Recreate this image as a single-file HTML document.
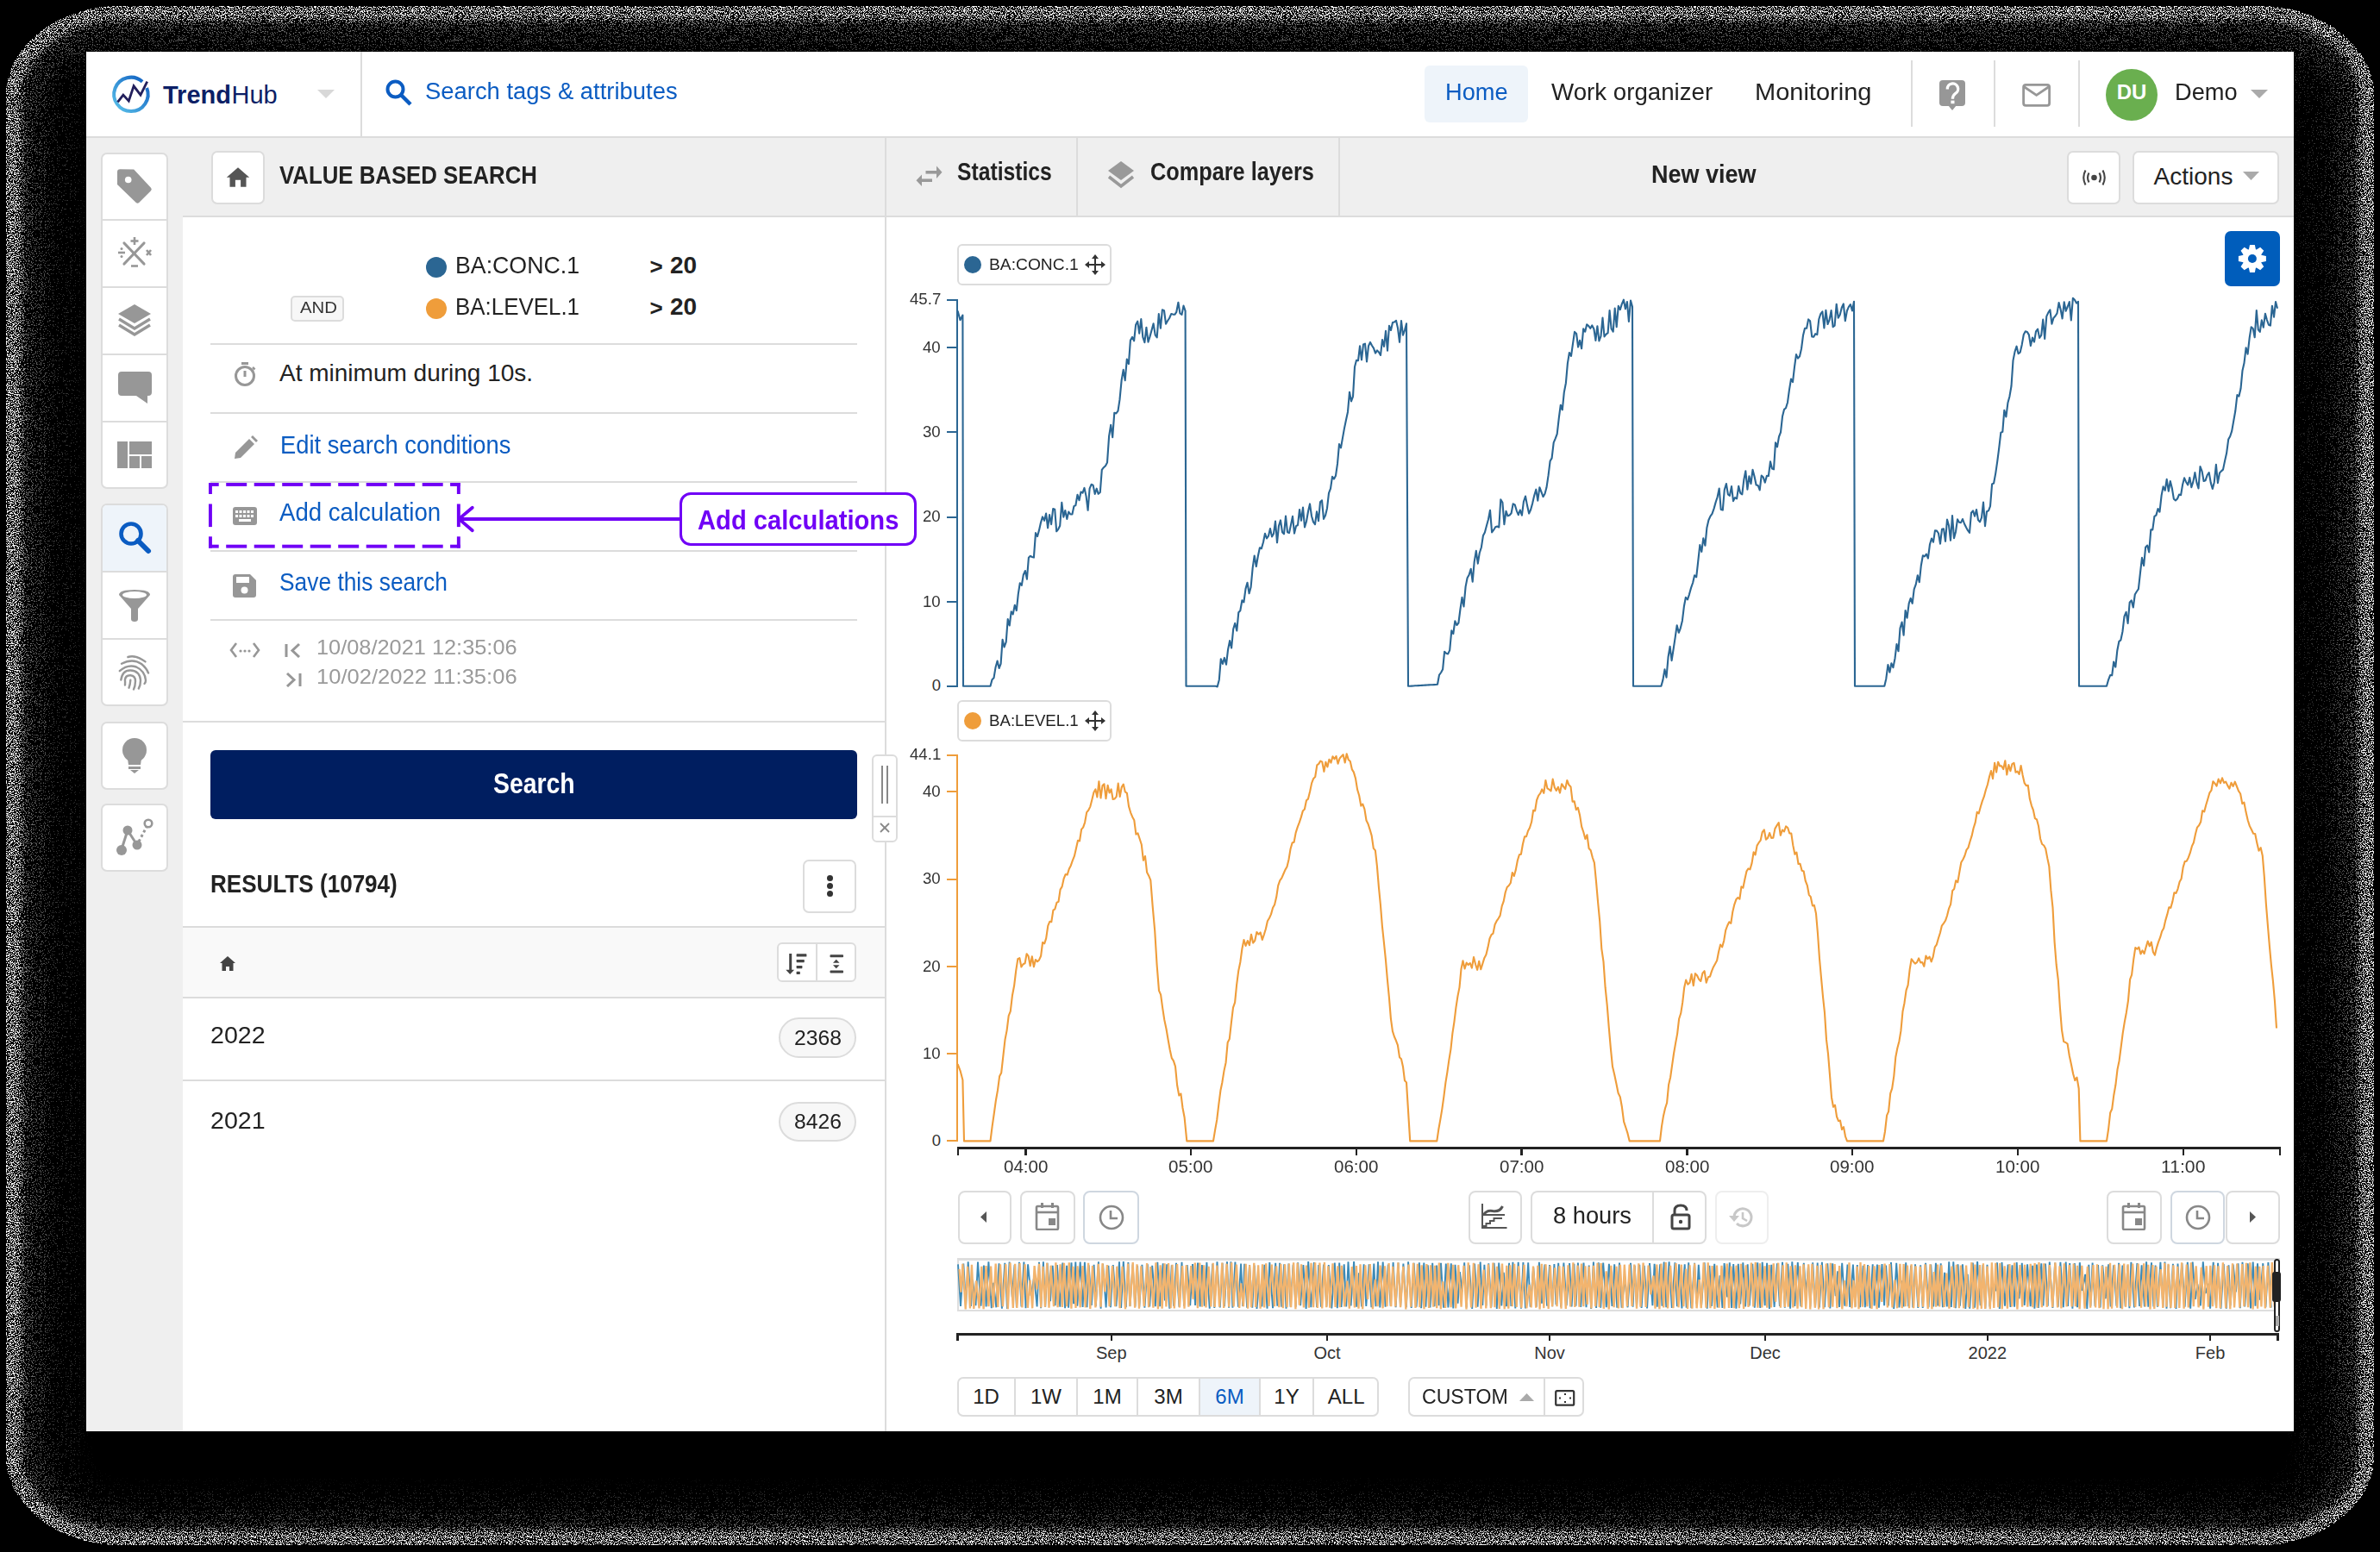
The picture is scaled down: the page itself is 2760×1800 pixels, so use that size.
<!DOCTYPE html>
<html><head><meta charset="utf-8"><style>
html,body{margin:0;padding:0;}
body{width:2760px;height:1800px;background:#000;position:relative;overflow:hidden;font-family:"Liberation Sans",sans-serif;}
body>div,body>svg{position:absolute;}
</style></head><body>
<svg style="left:0;top:0" width="2760" height="1800"><defs>
<filter id="gb3" x="-5%" y="-5%" width="110%" height="110%"><feGaussianBlur stdDeviation="3"/></filter>
<filter id="gb12" x="-5%" y="-5%" width="110%" height="110%"><feGaussianBlur stdDeviation="12"/></filter>
<filter id="gb16" x="-5%" y="-5%" width="110%" height="110%"><feGaussianBlur stdDeviation="16"/></filter>
<filter id="dither" x="0" y="0" width="2760" height="1800" filterUnits="userSpaceOnUse" color-interpolation-filters="sRGB">
<feColorMatrix in="SourceGraphic" type="matrix" values="0 0 0 0 0  0 0 0 0 0  0 0 0 0 0  1 0 0 0 0" result="L"/>
<feComponentTransfer in="L" result="Da"><feFuncA type="table" tableValues="0.000 0.050 0.094 0.137 0.180 0.202 0.225 0.247 0.270 0.283 0.297 0.310 0.323 0.337 0.350 0.363 0.377 0.390 0.403 0.417 0.430 0.430 0.430 0.430 0.430 0.430 0.430 0.430 0.430 0.430 0.430 0.430 0.430 0.430 0.430 0.430 0.430 0.430 0.430 0.430 0.430"/></feComponentTransfer>
<feColorMatrix in="Da" type="matrix" values="0 0 0 0 1  0 0 0 0 1  0 0 0 0 1  0 0 0 1 0" result="I"/>
<feTurbulence type="fractalNoise" baseFrequency="0.8" numOctaves="1" seed="7" result="T"/>
<feColorMatrix in="T" type="matrix" values="0 0 0 0 1  0 0 0 0 1  0 0 0 0 1  3.2 0 0 0 -1.1" result="N"/>
<feComposite in="I" in2="N" operator="arithmetic" k1="0" k2="30" k3="30" k4="-30" result="D"/>
<feComponentTransfer in="SourceGraphic" result="B"><feFuncR type="table" tableValues="0.150 0.188 0.225 0.262 0.300 0.350 0.400 0.450 0.500 0.537 0.575 0.613 0.650 0.688 0.725 0.762 0.800 0.837 0.875 0.912 0.950 0.953 0.955 0.957 0.960 0.962 0.965 0.968 0.970 0.972 0.975 0.978 0.980 0.982 0.985 0.988 0.990 0.993 0.995 0.998 1.000"/><feFuncG type="table" tableValues="0.150 0.188 0.225 0.262 0.300 0.350 0.400 0.450 0.500 0.537 0.575 0.613 0.650 0.688 0.725 0.762 0.800 0.837 0.875 0.912 0.950 0.953 0.955 0.957 0.960 0.962 0.965 0.968 0.970 0.972 0.975 0.978 0.980 0.982 0.985 0.988 0.990 0.993 0.995 0.998 1.000"/><feFuncB type="table" tableValues="0.150 0.188 0.225 0.262 0.300 0.350 0.400 0.450 0.500 0.537 0.575 0.613 0.650 0.688 0.725 0.762 0.800 0.837 0.875 0.912 0.950 0.953 0.955 0.957 0.960 0.962 0.965 0.968 0.970 0.972 0.975 0.978 0.980 0.982 0.985 0.988 0.990 0.993 0.995 0.998 1.000"/><feFuncA type="linear" slope="0" intercept="1"/></feComponentTransfer>
<feComposite in="D" in2="B" operator="arithmetic" k1="1" k2="0" k3="0" k4="0"/>
</filter></defs>
<g filter="url(#dither)">
<rect x="7" y="7" width="2746" height="1785" rx="135" ry="105" fill="rgb(128,128,128)"/>
<rect x="25" y="24" width="2710" height="1750" rx="117" ry="88" fill="rgb(52,52,52)" filter="url(#gb3)"/>
<rect x="45" y="44" width="2670" height="1716" rx="97" ry="70" fill="rgb(14,14,14)" filter="url(#gb12)"/>
<rect x="80" y="79" width="2600" height="1662" rx="62" ry="40" fill="rgb(0,0,0)" filter="url(#gb16)"/>
</g></svg>
<div style="left:100.0px;top:60.0px;width:2560.0px;height:1600.0px;background:#fff;"></div>
<div style="left:100.0px;top:158.0px;width:2560.0px;height:2.0px;background:#dcdcdc;"></div>
<svg style="left:126.0px;top:84.0px;" width="52" height="52" viewBox="0 0 52 52"><defs><linearGradient id="lg" x1="0" y1="1" x2="1" y2="0"><stop offset="0" stop-color="#5cc3ea"/><stop offset="1" stop-color="#0d5cc0"/></linearGradient></defs><path d="M 39.08 10.76 A 19.7 19.7 0 1 0 44.17 18.02" fill="none" stroke="url(#lg)" stroke-width="4"/><polyline points="10.5,34.4 16.9,26.1 23.3,33.1 29.1,15.8 37,26.1 44.7,10.6" fill="none" stroke="#221f5c" stroke-width="2.8" stroke-linejoin="miter"/></svg>
<div style="left:189.0px;top:95.8px;font-size:29px;line-height:29px;color:#0c1f66;font-weight:700;white-space:nowrap;">Trend</div>
<div style="left:268.5px;top:95.8px;font-size:29px;line-height:29px;color:#0c1f66;white-space:nowrap;font-weight:300;">Hub</div>
<svg style="left:368.0px;top:104.0px;" width="20" height="10" viewBox="0 0 20 10"><polygon points="0,0 20,0 10,10" fill="#d8d8d8"/></svg>
<div style="left:418.0px;top:60.0px;width:2.0px;height:98.0px;background:#dcdcdc;"></div>
<svg style="left:446.0px;top:91.0px;" width="34" height="34" viewBox="0 0 34 34"><circle cx="12.5" cy="12.5" r="9" fill="none" stroke="#0b5cc2" stroke-width="4"/><line x1="19" y1="19" x2="30" y2="30" stroke="#0b5cc2" stroke-width="4.5" stroke-linecap="butt"/></svg>
<div style="left:492.6px;top:93.1px;font-size:27px;line-height:27px;color:#0b5cc2;transform:scaleX(1.0154);transform-origin:0 0;white-space:nowrap;">Search tags &amp; attributes</div>
<div style="left:1652.0px;top:76.0px;width:120.0px;height:66.0px;background:#eef4fa;border-radius:6px;"></div>
<div style="left:1676.0px;top:92.7px;font-size:28px;line-height:28px;color:#0b5cc2;transform:scaleX(0.9720);transform-origin:0 0;white-space:nowrap;">Home</div>
<div style="left:1798.7px;top:92.7px;font-size:28px;line-height:28px;color:#222;transform:scaleX(0.9887);transform-origin:0 0;white-space:nowrap;">Work organizer</div>
<div style="left:2035.4px;top:92.7px;font-size:28px;line-height:28px;color:#222;transform:scaleX(1.0357);transform-origin:0 0;white-space:nowrap;">Monitoring</div>
<div style="left:2216.0px;top:70.0px;width:2.0px;height:77.0px;background:#dcdcdc;"></div>
<div style="left:2312.0px;top:70.0px;width:2.0px;height:77.0px;background:#dcdcdc;"></div>
<div style="left:2410.0px;top:70.0px;width:2.0px;height:77.0px;background:#dcdcdc;"></div>
<svg style="left:2246.0px;top:91.0px;" width="36" height="40" viewBox="0 0 36 40"><rect x="3" y="2" width="30" height="30" rx="4" fill="#979797"/><polygon points="13,31 23,31 18,37" fill="#979797"/><path d="M 12.3 12.5 A 6.2 6.2 0 1 1 21.5 17.5 Q 18.4 19.8 18.4 23.8" fill="none" stroke="#fff" stroke-width="3.3"/><rect x="16.4" y="25.6" width="4.1" height="3.6" fill="#fff"/></svg>
<svg style="left:2342.0px;top:95.0px;" width="38" height="30" viewBox="0 0 38 30"><rect x="4.6" y="3.3" width="30" height="24" rx="2.5" fill="none" stroke="#979797" stroke-width="2.8"/><polyline points="5,5.5 19.6,15.3 34.2,5.5" fill="none" stroke="#979797" stroke-width="2.8"/></svg>
<div style="left:2442px;top:80px;width:60px;height:60px;border-radius:50%;background:#6aaf4f;"></div>
<div style="left:2454.7px;top:95.3px;font-size:24px;line-height:24px;color:#fff;font-weight:700;white-space:nowrap;">DU</div>
<div style="left:2522.0px;top:92.7px;font-size:28px;line-height:28px;color:#222;transform:scaleX(0.9720);transform-origin:0 0;white-space:nowrap;">Demo</div>
<svg style="left:2610.0px;top:104.0px;" width="20" height="10" viewBox="0 0 20 10"><polygon points="0,0 20,0 10,10" fill="#aaa"/></svg>
<div style="left:100.0px;top:160.0px;width:2560.0px;height:91.0px;background:#efefef;"></div>
<div style="left:100.0px;top:251.0px;width:112.0px;height:1409.0px;background:#efefef;"></div>
<div style="left:212.0px;top:250.0px;width:2448.0px;height:2.0px;background:#dcdcdc;"></div>
<div style="left:212.0px;top:252.0px;width:814.0px;height:1408.0px;background:#fff;"></div>
<div style="left:1028.0px;top:252.0px;width:1632.0px;height:1408.0px;background:#fff;"></div>
<div style="left:1026.0px;top:160.0px;width:2.0px;height:1500.0px;background:#dcdcdc;"></div>
<div style="left:117.0px;top:177.0px;width:78.0px;height:390.0px;background:#fff;border:2px solid #dcdcdc;border-radius:7px;box-sizing:border-box;"></div>
<div style="left:119.0px;top:254.0px;width:74.0px;height:2.0px;background:#dcdcdc;"></div>
<div style="left:119.0px;top:332.0px;width:74.0px;height:2.0px;background:#dcdcdc;"></div>
<div style="left:119.0px;top:410.0px;width:74.0px;height:2.0px;background:#dcdcdc;"></div>
<div style="left:119.0px;top:488.0px;width:74.0px;height:2.0px;background:#dcdcdc;"></div>
<div style="left:117.0px;top:584.0px;width:78.0px;height:235.0px;background:#fff;border:2px solid #dcdcdc;border-radius:7px;box-sizing:border-box;"></div>
<div style="left:119.0px;top:586.0px;width:74.0px;height:76.0px;background:#eef4fa;border-radius:5px 5px 0 0;"></div>
<div style="left:119.0px;top:662.0px;width:74.0px;height:2.0px;background:#dcdcdc;"></div>
<div style="left:119.0px;top:740.0px;width:74.0px;height:2.0px;background:#dcdcdc;"></div>
<div style="left:117.0px;top:837.0px;width:78.0px;height:79.0px;background:#fff;border:2px solid #dcdcdc;border-radius:7px;box-sizing:border-box;"></div>
<div style="left:117.0px;top:932.0px;width:78.0px;height:79.0px;background:#fff;border:2px solid #dcdcdc;border-radius:7px;box-sizing:border-box;"></div>
<svg style="left:134.0px;top:194.0px;" width="44" height="44" viewBox="0 0 44 44"><path d="M2 5.5 Q2 2.3 5.2 2.3 L21.2 2.6 L41 23.8 Q42.6 25.5 41 27.2 L27.2 41 Q25.5 42.6 23.8 41 L2 20 Z" fill="#979797"/><circle cx="14.7" cy="14.5" r="3.8" fill="#fff"/></svg>
<svg style="left:136.0px;top:274.0px;" width="40" height="40" viewBox="0 0 40 40"><g stroke="#979797" stroke-width="3.2" stroke-linecap="round"><line x1="8" y1="8" x2="31" y2="32"/><line x1="31" y1="8" x2="8" y2="32"/></g><g stroke="#979797" stroke-width="2.6"><line x1="20" y1="1" x2="20" y2="10"/><line x1="15.5" y1="5.5" x2="24.5" y2="5.5"/><line x1="16" y1="34.5" x2="24" y2="34.5"/><line x1="1" y1="19" x2="9" y2="19"/><line x1="34" y1="16" x2="39" y2="22"/><line x1="39" y1="16" x2="34" y2="22"/></g><circle cx="5" cy="14.5" r="1.5" fill="#979797"/><circle cx="5" cy="23.5" r="1.5" fill="#979797"/></svg>
<svg style="left:135.0px;top:351.0px;" width="42" height="42" viewBox="0 0 42 42"><polygon points="21,2 40,13 21,24 2,13" fill="#979797"/><polyline points="3,19 21,30 39,19" fill="none" stroke="#979797" stroke-width="3.4"/><polyline points="3,26 21,37 39,26" fill="none" stroke="#979797" stroke-width="3.4"/></svg>
<svg style="left:135.0px;top:429.0px;" width="42" height="42" viewBox="0 0 42 42"><path d="M2 6 Q2 2 6 2 L37 2 Q41 2 41 6 L41 26 Q41 30 37 30 L36 30 L36 39 L23 30 L6 30 Q2 30 2 26 Z" fill="#979797"/></svg>
<svg style="left:135.0px;top:511.0px;" width="42" height="34" viewBox="0 0 42 34"><rect x="1" y="1" width="12" height="31" fill="#979797"/><rect x="15" y="1" width="26" height="15" fill="#979797"/><rect x="15" y="18" width="12" height="14" fill="#979797"/><rect x="29" y="18" width="12" height="14" fill="#979797"/></svg>
<svg style="left:135.0px;top:602.0px;" width="42" height="42" viewBox="0 0 42 42"><circle cx="17" cy="17" r="11.5" fill="none" stroke="#0b5cc2" stroke-width="4.6"/><line x1="25" y1="25" x2="37" y2="37" stroke="#0b5cc2" stroke-width="6" stroke-linecap="round"/></svg>
<svg style="left:136.0px;top:682.0px;" width="40" height="40" viewBox="0 0 40 40"><path d="M2 8 Q2 2 20 2 Q38 2 38 8 L24 24 L24 36 Q24 39 20 39 Q16 39 16 36 L16 24 Z" fill="#979797"/><ellipse cx="20" cy="8" rx="14" ry="4" fill="#fff"/></svg>
<svg style="left:126.0px;top:750.0px;" width="60" height="60" viewBox="0 0 60 60"><g fill="none" stroke="#979797" stroke-width="2.4" stroke-linecap="round"><path d="M22.4 12 Q31 9 42.5 17.4"/><path d="M15 19.7 Q28 13 38 20 Q44 25 46 30.5"/><path d="M12.8 28.2 Q22 20 32 23.5 Q42 28 43 39 Q43 41.5 41.5 43"/><path d="M14.3 38.5 Q16 27 25.5 27.5 Q36 28 37 39 Q37 45 34.8 48.5"/><path d="M19 44.5 Q19.3 41 18.9 38.5 Q19.5 33 25.3 33.2 Q31 33.5 31 40 Q30.8 46 29 49.5"/><path d="M25.3 38.7 Q25 44 23.5 47.7"/></g></svg>
<svg style="left:140.0px;top:856.0px;" width="32" height="42" viewBox="0 0 32 42"><circle cx="16" cy="14" r="14" fill="#979797"/><path d="M8 24 L24 24 L23 31 L9 31 Z" fill="#979797"/><rect x="9" y="33" width="14" height="3" fill="#979797"/><path d="M11 37 L21 37 L16 41 Z" fill="#979797"/></svg>
<svg style="left:134.0px;top:949.0px;" width="44" height="44" viewBox="0 0 44 44"><g stroke="#979797" stroke-width="3"><line x1="7" y1="36" x2="14" y2="14"/><line x1="14" y1="14" x2="25" y2="31"/></g><line x1="27" y1="27" x2="36" y2="10" stroke="#979797" stroke-width="3" stroke-dasharray="3 3"/><circle cx="7" cy="37" r="6" fill="#979797"/><circle cx="14" cy="14" r="5.5" fill="#979797"/><circle cx="25" cy="31" r="5.5" fill="#979797"/><circle cx="38" cy="6" r="4.3" fill="none" stroke="#979797" stroke-width="2.6"/></svg>
<div style="left:245.0px;top:175.0px;width:62.0px;height:62.0px;background:#fff;border:2px solid #dcdcdc;border-radius:7px;box-sizing:border-box;"></div>
<svg style="left:261.0px;top:192.0px;" width="30" height="28" viewBox="0 0 30 28"><path d="M15 2.3 L28.2 13.8 L24.5 13.8 L24.5 24.8 L18.1 24.8 L18.1 16.8 L11.9 16.8 L11.9 24.8 L5.5 24.8 L5.5 13.8 L1.8 13.8 Z" fill="#555"/></svg>
<div style="left:324.0px;top:187.6px;font-size:30px;line-height:30px;color:#222;font-weight:700;transform:scaleX(0.8596);transform-origin:0 0;white-space:nowrap;">VALUE BASED SEARCH</div>
<div style="left:493.7px;top:297.7px;width:24px;height:24px;border-radius:50%;background:#2b6693;"></div>
<div style="left:493.7px;top:345.7px;width:24px;height:24px;border-radius:50%;background:#ef9d3b;"></div>
<div style="left:527.5px;top:294.3px;font-size:28px;line-height:28px;color:#222;transform:scaleX(0.9541);transform-origin:0 0;white-space:nowrap;">BA:CONC.1</div>
<div style="left:527.5px;top:342.3px;font-size:28px;line-height:28px;color:#222;transform:scaleX(0.9251);transform-origin:0 0;white-space:nowrap;">BA:LEVEL.1</div>
<div style="left:753.5px;top:296.0px;font-size:26px;line-height:26px;color:#222;font-weight:700;white-space:nowrap;">&gt;</div>
<div style="left:777.0px;top:294.3px;font-size:28px;line-height:28px;color:#222;font-weight:700;white-space:nowrap;">20</div>
<div style="left:753.5px;top:344.0px;font-size:26px;line-height:26px;color:#222;font-weight:700;white-space:nowrap;">&gt;</div>
<div style="left:777.0px;top:342.3px;font-size:28px;line-height:28px;color:#222;font-weight:700;white-space:nowrap;">20</div>
<div style="left:337.0px;top:343.0px;width:62.0px;height:30.0px;background:#f7f7f7;border:2px solid #dcdcdc;border-radius:5px;box-sizing:border-box;"></div>
<div style="left:347.5px;top:348.3px;font-size:18.5px;line-height:18.5px;color:#333;transform:scaleX(1.1008);transform-origin:0 0;white-space:nowrap;">AND</div>
<div style="left:244.0px;top:398.0px;width:750.0px;height:2.0px;background:#dcdcdc;"></div>
<div style="left:244.0px;top:477.5px;width:750.0px;height:2.0px;background:#dcdcdc;"></div>
<div style="left:244.0px;top:558.0px;width:750.0px;height:2.0px;background:#dcdcdc;"></div>
<div style="left:244.0px;top:638.0px;width:750.0px;height:2.0px;background:#dcdcdc;"></div>
<div style="left:244.0px;top:718.0px;width:750.0px;height:2.0px;background:#dcdcdc;"></div>
<svg style="left:270.0px;top:419.0px;" width="28" height="30" viewBox="0 0 28 30"><circle cx="14" cy="17" r="10.5" fill="none" stroke="#979797" stroke-width="3"/><line x1="10" y1="2.5" x2="18" y2="2.5" stroke="#979797" stroke-width="3"/><line x1="14" y1="11" x2="14" y2="18" stroke="#979797" stroke-width="3"/><line x1="23" y1="7" x2="25.5" y2="9.5" stroke="#979797" stroke-width="2.5"/></svg>
<div style="left:324.0px;top:418.7px;font-size:28px;line-height:28px;color:#222;white-space:nowrap;">At minimum during 10s.</div>
<svg style="left:268.0px;top:504.0px;" width="32" height="32" viewBox="0 0 32 32"><path d="M4 28 L5 21 L21 5 L27 11 L11 27 Z" fill="#979797"/><path d="M23 3 L25 1 L31 7 L29 9 Z" fill="#979797"/></svg>
<div style="left:324.8px;top:502.1px;font-size:29px;line-height:29px;color:#0b5cc2;transform:scaleX(0.9425);transform-origin:0 0;white-space:nowrap;">Edit search conditions</div>
<svg style="left:269.0px;top:587.0px;" width="30" height="24" viewBox="0 0 30 24"><rect x="1" y="1" width="28" height="21" rx="3" fill="#979797"/><rect x="4.0" y="5" width="3" height="3" fill="#fff"/><rect x="4.0" y="10" width="3" height="3" fill="#fff"/><rect x="8.5" y="5" width="3" height="3" fill="#fff"/><rect x="8.5" y="10" width="3" height="3" fill="#fff"/><rect x="13.0" y="5" width="3" height="3" fill="#fff"/><rect x="13.0" y="10" width="3" height="3" fill="#fff"/><rect x="17.5" y="5" width="3" height="3" fill="#fff"/><rect x="17.5" y="10" width="3" height="3" fill="#fff"/><rect x="22.0" y="5" width="3" height="3" fill="#fff"/><rect x="22.0" y="10" width="3" height="3" fill="#fff"/><rect x="8" y="15" width="14" height="3" fill="#fff"/></svg>
<div style="left:324.0px;top:580.4px;font-size:29px;line-height:29px;color:#0b5cc2;transform:scaleX(0.9518);transform-origin:0 0;white-space:nowrap;">Add calculation</div>
<svg style="left:269.0px;top:665.0px;" width="29" height="29" viewBox="0 0 29 29"><path d="M1 4 Q1 1 4 1 L21 1 L28 8 L28 25 Q28 28 25 28 L4 28 Q1 28 1 25 Z" fill="#979797"/><rect x="5" y="4" width="15" height="7" fill="#fff"/><circle cx="14.5" cy="19.5" r="4" fill="#fff"/></svg>
<div style="left:324.0px;top:661.0px;font-size:29px;line-height:29px;color:#0b5cc2;transform:scaleX(0.9086);transform-origin:0 0;white-space:nowrap;">Save this search</div>
<svg style="left:266.0px;top:742.0px;" width="36" height="24" viewBox="0 0 36 24"><polyline points="8,4 2,12 8,20" fill="none" stroke="#979797" stroke-width="2.6"/><polyline points="28,4 34,12 28,20" fill="none" stroke="#979797" stroke-width="2.6"/><circle cx="13" cy="13" r="1.6" fill="#979797"/><circle cx="18" cy="13" r="1.6" fill="#979797"/><circle cx="23" cy="13" r="1.6" fill="#979797"/></svg>
<svg style="left:329.0px;top:745.0px;" width="22" height="18" viewBox="0 0 22 18"><line x1="3" y1="2" x2="3" y2="17" stroke="#979797" stroke-width="3"/><polyline points="18,2 10,9.5 18,17" fill="none" stroke="#979797" stroke-width="3"/></svg>
<svg style="left:329.0px;top:779.0px;" width="22" height="18" viewBox="0 0 22 18"><line x1="19" y1="2" x2="19" y2="17" stroke="#979797" stroke-width="3"/><polyline points="4,2 12,9.5 4,17" fill="none" stroke="#979797" stroke-width="3"/></svg>
<div style="left:367.0px;top:738.7px;font-size:24px;line-height:24px;color:#9a9a9a;transform:scaleX(1.0563);transform-origin:0 0;white-space:nowrap;">10/08/2021 12:35:06</div>
<div style="left:367.0px;top:772.7px;font-size:24px;line-height:24px;color:#9a9a9a;transform:scaleX(1.0649);transform-origin:0 0;white-space:nowrap;">10/02/2022 11:35:06</div>
<div style="left:212.0px;top:836.0px;width:814.0px;height:2.0px;background:#dcdcdc;"></div>
<svg style="left:242.2px;top:560.2px;" width="291.8" height="75.6" viewBox="0 0 291.8 75.6"><rect x="0.0" y="0.0" width="11.7" height="3.9" fill="#7000f6"/><rect x="0.0" y="71.7" width="11.7" height="3.9" fill="#7000f6"/><rect x="20.2" y="0.0" width="24.0" height="3.9" fill="#7000f6"/><rect x="20.2" y="71.7" width="24.0" height="3.9" fill="#7000f6"/><rect x="52.7" y="0.0" width="24.0" height="3.9" fill="#7000f6"/><rect x="52.7" y="71.7" width="24.0" height="3.9" fill="#7000f6"/><rect x="85.2" y="0.0" width="24.0" height="3.9" fill="#7000f6"/><rect x="85.2" y="71.7" width="24.0" height="3.9" fill="#7000f6"/><rect x="117.7" y="0.0" width="24.0" height="3.9" fill="#7000f6"/><rect x="117.7" y="71.7" width="24.0" height="3.9" fill="#7000f6"/><rect x="150.2" y="0.0" width="24.0" height="3.9" fill="#7000f6"/><rect x="150.2" y="71.7" width="24.0" height="3.9" fill="#7000f6"/><rect x="182.7" y="0.0" width="24.0" height="3.9" fill="#7000f6"/><rect x="182.7" y="71.7" width="24.0" height="3.9" fill="#7000f6"/><rect x="215.2" y="0.0" width="24.0" height="3.9" fill="#7000f6"/><rect x="215.2" y="71.7" width="24.0" height="3.9" fill="#7000f6"/><rect x="247.7" y="0.0" width="24.0" height="3.9" fill="#7000f6"/><rect x="247.7" y="71.7" width="24.0" height="3.9" fill="#7000f6"/><rect x="280.1" y="0.0" width="11.7" height="3.9" fill="#7000f6"/><rect x="280.1" y="71.7" width="11.7" height="3.9" fill="#7000f6"/><rect x="0.0" y="0.0" width="3.9" height="13.0" fill="#7000f6"/><rect x="287.9" y="0.0" width="3.9" height="13.0" fill="#7000f6"/><rect x="0.0" y="24.5" width="3.9" height="26.6" fill="#7000f6"/><rect x="287.9" y="24.5" width="3.9" height="26.6" fill="#7000f6"/><rect x="0.0" y="62.3" width="3.9" height="13.3" fill="#7000f6"/><rect x="287.9" y="62.3" width="3.9" height="13.3" fill="#7000f6"/></svg>
<div style="left:532.0px;top:600.2px;width:257.0px;height:3.4px;background:#7000f6;"></div>
<svg style="left:526.0px;top:584.0px;" width="28" height="36" viewBox="0 0 28 36"><polyline points="21.8,4.7 6.2,17.9 21.8,31.3" fill="none" stroke="#7000f6" stroke-width="3.8" stroke-linecap="round" stroke-linejoin="round"/></svg>
<div style="left:788.2px;top:570.6px;width:275.3px;height:62.4px;box-sizing:border-box;border:3.6px solid #7000f6;border-radius:13px;background:#fff;"></div>
<div style="left:809.0px;top:587.0px;font-size:32px;line-height:32px;color:#7000f6;font-weight:700;transform:scaleX(0.9115);transform-origin:0 0;white-space:nowrap;">Add calculations</div>
<div style="left:244.0px;top:870.0px;width:750.0px;height:79.5px;background:#001e60;border-radius:6px;"></div>
<div style="left:571.6px;top:892.3px;font-size:33px;line-height:33px;color:#fff;font-weight:700;transform:scaleX(0.8603);transform-origin:0 0;white-space:nowrap;">Search</div>
<div style="left:1010.6px;top:875.0px;width:30.4px;height:102.0px;background:#fff;border:2px solid #dcdcdc;border-radius:6px;box-sizing:border-box;"></div>
<div style="left:1011.0px;top:945.6px;width:29.0px;height:2.0px;background:#dcdcdc;"></div>
<div style="left:1022.0px;top:888.0px;width:2.0px;height:44.0px;background:#888;"></div>
<div style="left:1028.0px;top:888.0px;width:2.0px;height:44.0px;background:#888;"></div>
<svg style="left:1019.0px;top:953.0px;" width="14" height="14" viewBox="0 0 14 14"><g stroke="#888" stroke-width="1.8"><line x1="2" y1="2" x2="12" y2="12"/><line x1="12" y1="2" x2="2" y2="12"/></g></svg>
<div style="left:244.0px;top:1011.4px;font-size:29px;line-height:29px;color:#222;font-weight:700;transform:scaleX(0.8988);transform-origin:0 0;white-space:nowrap;">RESULTS (10794)</div>
<div style="left:930.7px;top:996.5px;width:62.3px;height:62.1px;background:#fff;border:2px solid #dcdcdc;border-radius:7px;box-sizing:border-box;"></div>
<div style="left:958.5px;top:1015.0px;width:7px;height:7px;border-radius:50%;background:#333;"></div>
<div style="left:958.5px;top:1024.0px;width:7px;height:7px;border-radius:50%;background:#333;"></div>
<div style="left:958.5px;top:1033.0px;width:7px;height:7px;border-radius:50%;background:#333;"></div>
<div style="left:212.0px;top:1074.0px;width:814.0px;height:2.0px;background:#dcdcdc;"></div>
<div style="left:212.0px;top:1076.0px;width:814.0px;height:80.0px;background:#f9f9f9;"></div>
<div style="left:212.0px;top:1156.0px;width:814.0px;height:2.0px;background:#dcdcdc;"></div>
<svg style="left:254.0px;top:1108.0px;" width="20" height="19" viewBox="0 0 20 19"><path d="M10 1 L19 9 L16.5 9 L16.5 18 L12 18 L12 13 L8 13 L8 18 L3.5 18 L3.5 9 L1 9 Z" fill="#444"/></svg>
<div style="left:901.0px;top:1092.6px;width:92.0px;height:46.6px;background:#fff;border:2px solid #dcdcdc;border-radius:6px;box-sizing:border-box;"></div>
<div style="left:946.0px;top:1094.0px;width:2.0px;height:44.0px;background:#dcdcdc;"></div>
<svg style="left:909.0px;top:1101.0px;" width="30" height="30" viewBox="0 0 30 30"><g fill="#444"><rect x="6.2" y="5" width="3" height="20"/><polygon points="2.3,23.8 12.1,23.8 7.2,29"/><rect x="14.6" y="5.3" width="11.8" height="3.2" rx="0.6"/><rect x="14.6" y="12" width="9.2" height="3.2" rx="0.6"/><rect x="14.6" y="19" width="6.8" height="3.2" rx="0.6"/><rect x="14.6" y="25.8" width="4.2" height="3.2" rx="0.6"/></g></svg>
<svg style="left:956.0px;top:1103.0px;" width="28" height="28" viewBox="0 0 28 28"><g fill="#444"><rect x="6.5" y="4.3" width="15.5" height="3" rx="0.8"/><rect x="6.5" y="22.6" width="15.5" height="3" rx="0.8"/><polygon points="10,13.7 17.5,13.7 13.75,9.8"/><polygon points="10,16.2 17.5,16.2 13.75,20.2"/></g></svg>
<div style="left:244.0px;top:1187.3px;font-size:28px;line-height:28px;color:#222;transform:scaleX(1.0210);transform-origin:0 0;white-space:nowrap;">2022</div>
<div style="left:244.0px;top:1286.1px;font-size:28px;line-height:28px;color:#222;transform:scaleX(1.0210);transform-origin:0 0;white-space:nowrap;">2021</div>
<div style="left:212.0px;top:1252.0px;width:814.0px;height:2.0px;background:#dcdcdc;"></div>
<div style="left:903.0px;top:1180.4px;width:90.0px;height:46.3px;background:#f7f7f7;border:2px solid #dcdcdc;border-radius:24px;box-sizing:border-box;"></div>
<div style="left:920.5px;top:1191.6px;font-size:24px;line-height:24px;color:#222;transform:scaleX(1.0282);transform-origin:0 0;white-space:nowrap;">2368</div>
<div style="left:903.0px;top:1278.0px;width:90.0px;height:46.3px;background:#f7f7f7;border:2px solid #dcdcdc;border-radius:24px;box-sizing:border-box;"></div>
<div style="left:920.5px;top:1289.2px;font-size:24px;line-height:24px;color:#222;transform:scaleX(1.0282);transform-origin:0 0;white-space:nowrap;">8426</div>
<svg style="left:1060.0px;top:186.0px;" width="36" height="32" viewBox="0 0 36 32"><g fill="#999"><rect x="13.5" y="12" width="13.5" height="3.6"/><polygon points="26,6.5 32.5,13.8 26,21"/><rect x="8.5" y="21.4" width="12.5" height="3.6"/><polygon points="2.5,23.2 9,16.5 9,30"/></g></svg>
<div style="left:1110.0px;top:185.4px;font-size:29px;line-height:29px;color:#222;font-weight:700;transform:scaleX(0.8515);transform-origin:0 0;white-space:nowrap;">Statistics</div>
<div style="left:1248.0px;top:160.0px;width:2.0px;height:90.0px;background:#dcdcdc;"></div>
<svg style="left:1283.0px;top:185.0px;" width="34" height="36" viewBox="0 0 34 36"><polygon points="17,2 32,13 17,24 2,13" fill="#999"/><polyline points="3,20 17,31 31,20" fill="none" stroke="#999" stroke-width="3.6"/></svg>
<div style="left:1333.6px;top:185.4px;font-size:29px;line-height:29px;color:#222;font-weight:700;transform:scaleX(0.8722);transform-origin:0 0;white-space:nowrap;">Compare layers</div>
<div style="left:1552.0px;top:160.0px;width:2.0px;height:90.0px;background:#dcdcdc;"></div>
<div style="left:1915.0px;top:188.0px;font-size:29px;line-height:29px;color:#222;font-weight:700;transform:scaleX(0.9314);transform-origin:0 0;white-space:nowrap;">New view</div>
<div style="left:2397.0px;top:175.0px;width:62.0px;height:62.0px;background:#fff;border:2px solid #dcdcdc;border-radius:7px;box-sizing:border-box;"></div>
<svg style="left:2414.0px;top:196.0px;" width="30" height="20" viewBox="0 0 30 20"><circle cx="14.5" cy="10" r="3.3" fill="#444"/><g fill="none" stroke="#444" stroke-width="2.1"><path d="M8.5 4.5 Q5.5 10 8.5 15.5"/><path d="M20.5 4.5 Q23.5 10 20.5 15.5"/><path d="M4.5 1.5 Q0 10 4.5 18.5"/><path d="M24.5 1.5 Q29 10 24.5 18.5"/></g></svg>
<div style="left:2473.0px;top:175.0px;width:170.0px;height:62.0px;background:#fff;border:2px solid #dcdcdc;border-radius:7px;box-sizing:border-box;"></div>
<div style="left:2497.6px;top:191.3px;font-size:28px;line-height:28px;color:#222;white-space:nowrap;">Actions</div>
<svg style="left:2601.0px;top:199.0px;" width="19" height="10" viewBox="0 0 19 10"><polygon points="0,0 19,0 9.5,10" fill="#aaa"/></svg>
<div style="left:2580.0px;top:268.0px;width:64.0px;height:64.0px;background:#005dbb;border-radius:7px;"></div>
<svg style="left:2592.0px;top:280.0px;" width="40" height="40" viewBox="0 0 40 40"><g transform="translate(19.9 20)"><polygon points="-4.4,-9 4.4,-9 2.9,-16 -2.9,-16" transform="rotate(0)" fill="#fff"/><polygon points="-4.4,-9 4.4,-9 2.9,-16 -2.9,-16" transform="rotate(45)" fill="#fff"/><polygon points="-4.4,-9 4.4,-9 2.9,-16 -2.9,-16" transform="rotate(90)" fill="#fff"/><polygon points="-4.4,-9 4.4,-9 2.9,-16 -2.9,-16" transform="rotate(135)" fill="#fff"/><polygon points="-4.4,-9 4.4,-9 2.9,-16 -2.9,-16" transform="rotate(180)" fill="#fff"/><polygon points="-4.4,-9 4.4,-9 2.9,-16 -2.9,-16" transform="rotate(225)" fill="#fff"/><polygon points="-4.4,-9 4.4,-9 2.9,-16 -2.9,-16" transform="rotate(270)" fill="#fff"/><polygon points="-4.4,-9 4.4,-9 2.9,-16 -2.9,-16" transform="rotate(315)" fill="#fff"/><circle r="11.3" fill="#fff"/><circle r="5" fill="#005dbb"/></g></svg>
<div style="left:1110.0px;top:283.0px;width:179.0px;height:48.0px;background:#fff;border:2px solid #dcdcdc;border-radius:6px;box-sizing:border-box;"></div>
<div style="left:1118px;top:297px;width:20px;height:20px;border-radius:50%;background:#2b6693;"></div>
<div style="left:1146.7px;top:296.9px;font-size:19px;line-height:19px;color:#222;transform:scaleX(1.0126);transform-origin:0 0;white-space:nowrap;">BA:CONC.1</div>
<svg style="left:1258.0px;top:295.0px;" width="24" height="24" viewBox="0 0 24 24"><g fill="#333"><rect x="11" y="4" width="2" height="16"/><rect x="4" y="11" width="16" height="2"/><polygon points="12,0 16,5 8,5"/><polygon points="12,24 16,19 8,19"/><polygon points="0,12 5,8 5,16"/><polygon points="24,12 19,8 19,16"/></g></svg>
<div style="left:1110.0px;top:812.0px;width:179.0px;height:48.0px;background:#fff;border:2px solid #dcdcdc;border-radius:6px;box-sizing:border-box;"></div>
<div style="left:1118px;top:826px;width:20px;height:20px;border-radius:50%;background:#ef9d3b;"></div>
<div style="left:1146.7px;top:825.9px;font-size:19px;line-height:19px;color:#222;transform:scaleX(0.9818);transform-origin:0 0;white-space:nowrap;">BA:LEVEL.1</div>
<svg style="left:1258.0px;top:824.0px;" width="24" height="24" viewBox="0 0 24 24"><g fill="#333"><rect x="11" y="4" width="2" height="16"/><rect x="4" y="11" width="16" height="2"/><polygon points="12,0 16,5 8,5"/><polygon points="12,24 16,19 8,19"/><polygon points="0,12 5,8 5,16"/><polygon points="24,12 19,8 19,16"/></g></svg>
<div style="left:1109.3px;top:346.7px;width:2.2px;height:450.1px;background:#2b6693;"></div>
<div style="left:1098.0px;top:346.6px;width:12.0px;height:2.2px;background:#2b6693;"></div>
<div style="left:1054.8px;top:338.3px;font-size:18.5px;line-height:18.5px;color:#333;transform:scaleX(1.0065);transform-origin:0 0;white-space:nowrap;">45.7</div>
<div style="left:1098.0px;top:402.1px;width:12.0px;height:2.2px;background:#2b6693;"></div>
<div style="left:1070.3px;top:393.8px;font-size:18.5px;line-height:18.5px;color:#333;transform:scaleX(1.0065);transform-origin:0 0;white-space:nowrap;">40</div>
<div style="left:1098.0px;top:499.9px;width:12.0px;height:2.2px;background:#2b6693;"></div>
<div style="left:1070.3px;top:491.6px;font-size:18.5px;line-height:18.5px;color:#333;transform:scaleX(1.0065);transform-origin:0 0;white-space:nowrap;">30</div>
<div style="left:1098.0px;top:598.5px;width:12.0px;height:2.2px;background:#2b6693;"></div>
<div style="left:1070.3px;top:590.2px;font-size:18.5px;line-height:18.5px;color:#333;transform:scaleX(1.0065);transform-origin:0 0;white-space:nowrap;">20</div>
<div style="left:1098.0px;top:696.9px;width:12.0px;height:2.2px;background:#2b6693;"></div>
<div style="left:1070.3px;top:688.6px;font-size:18.5px;line-height:18.5px;color:#333;transform:scaleX(1.0065);transform-origin:0 0;white-space:nowrap;">10</div>
<div style="left:1098.0px;top:794.7px;width:12.0px;height:2.2px;background:#2b6693;"></div>
<div style="left:1080.7px;top:786.4px;font-size:18.5px;line-height:18.5px;color:#333;white-space:nowrap;">0</div>
<div style="left:1109.3px;top:874.8px;width:2.2px;height:449.6px;background:#ef9d3b;"></div>
<div style="left:1098.0px;top:874.7px;width:12.0px;height:2.2px;background:#ef9d3b;"></div>
<div style="left:1054.8px;top:866.4px;font-size:18.5px;line-height:18.5px;color:#333;transform:scaleX(1.0065);transform-origin:0 0;white-space:nowrap;">44.1</div>
<div style="left:1098.0px;top:917.2px;width:12.0px;height:2.2px;background:#ef9d3b;"></div>
<div style="left:1070.3px;top:908.9px;font-size:18.5px;line-height:18.5px;color:#333;transform:scaleX(1.0065);transform-origin:0 0;white-space:nowrap;">40</div>
<div style="left:1098.0px;top:1018.5px;width:12.0px;height:2.2px;background:#ef9d3b;"></div>
<div style="left:1070.3px;top:1010.2px;font-size:18.5px;line-height:18.5px;color:#333;transform:scaleX(1.0065);transform-origin:0 0;white-space:nowrap;">30</div>
<div style="left:1098.0px;top:1119.9px;width:12.0px;height:2.2px;background:#ef9d3b;"></div>
<div style="left:1070.3px;top:1111.6px;font-size:18.5px;line-height:18.5px;color:#333;transform:scaleX(1.0065);transform-origin:0 0;white-space:nowrap;">20</div>
<div style="left:1098.0px;top:1221.1px;width:12.0px;height:2.2px;background:#ef9d3b;"></div>
<div style="left:1070.3px;top:1212.8px;font-size:18.5px;line-height:18.5px;color:#333;transform:scaleX(1.0065);transform-origin:0 0;white-space:nowrap;">10</div>
<div style="left:1098.0px;top:1322.3px;width:12.0px;height:2.2px;background:#ef9d3b;"></div>
<div style="left:1080.7px;top:1314.0px;font-size:18.5px;line-height:18.5px;color:#333;white-space:nowrap;">0</div>
<svg style="left:0;top:0" width="2760" height="1800"><path d="M1110.6 360.6 L1113.5 371.3 L1116.4 365.5 L1117.0 795.8 L1119.1 795.8 L1121.2 795.8 L1123.3 795.8 L1125.4 795.8 L1127.5 795.8 L1129.6 795.8 L1131.7 795.8 L1133.8 795.8 L1135.9 795.8 L1138.0 795.8 L1140.1 795.8 L1142.2 795.8 L1144.3 795.8 L1146.4 795.8 L1148.5 795.8 L1150.5 788.2 L1152.5 786.3 L1154.6 773.7 L1156.6 766.6 L1158.6 775.0 L1160.6 769.9 L1162.6 741.7 L1164.6 750.5 L1166.7 744.7 L1168.7 718.1 L1170.7 725.5 L1172.7 709.4 L1174.7 712.4 L1176.8 701.7 L1178.8 708.1 L1180.8 688.9 L1182.8 676.2 L1184.8 678.9 L1186.8 666.7 L1188.9 662.0 L1190.9 671.6 L1192.9 646.8 L1194.9 644.8 L1196.9 646.0 L1198.9 646.6 L1201.0 618.1 L1203.0 622.1 L1205.0 614.9 L1207.0 606.1 L1209.0 599.4 L1211.1 603.8 L1213.1 595.5 L1215.1 612.3 L1217.1 597.1 L1219.1 608.1 L1221.2 590.0 L1223.2 590.7 L1225.2 616.3 L1227.2 613.8 L1229.2 609.7 L1231.3 582.8 L1233.3 599.7 L1235.3 592.0 L1237.3 601.9 L1239.3 593.6 L1241.4 596.5 L1243.4 596.5 L1245.4 587.2 L1247.4 586.0 L1249.5 573.8 L1251.5 580.2 L1253.5 570.5 L1255.5 571.7 L1257.5 565.9 L1259.6 575.6 L1261.6 591.8 L1263.6 566.6 L1265.6 561.8 L1267.6 562.6 L1269.7 572.9 L1271.7 566.7 L1273.7 572.8 L1275.8 570.9 L1277.8 544.9 L1279.9 542.2 L1282.0 540.2 L1284.0 536.5 L1286.1 506.0 L1288.2 492.9 L1290.2 507.1 L1292.3 478.7 L1294.4 479.4 L1296.5 476.7 L1298.5 463.4 L1300.6 441.3 L1302.7 428.9 L1304.7 441.2 L1306.8 416.6 L1308.9 422.1 L1310.9 394.7 L1313.0 390.9 L1315.1 395.3 L1317.1 376.8 L1319.2 372.6 L1321.2 386.7 L1323.3 370.1 L1325.3 390.9 L1327.4 397.2 L1329.4 379.7 L1331.5 396.7 L1333.5 390.4 L1335.6 382.7 L1337.6 375.3 L1339.7 388.7 L1341.7 391.3 L1343.8 364.1 L1345.9 380.6 L1347.9 359.2 L1350.0 360.1 L1352.0 375.6 L1354.1 372.0 L1356.1 369.0 L1358.2 364.1 L1360.2 364.6 L1362.3 364.8 L1364.3 361.8 L1366.4 350.7 L1368.4 363.4 L1370.5 364.8 L1372.5 354.6 L1374.6 360.6 L1375.5 795.8 L1377.5 795.8 L1379.5 795.8 L1381.5 795.8 L1383.5 795.8 L1385.6 795.8 L1387.6 795.8 L1389.6 795.8 L1391.6 795.8 L1393.6 795.8 L1395.6 795.8 L1397.6 795.8 L1399.6 795.8 L1401.7 795.8 L1403.7 795.8 L1405.7 795.8 L1407.7 795.8 L1409.7 795.8 L1411.7 796.4 L1413.8 788.4 L1415.8 764.2 L1417.9 770.0 L1419.9 762.9 L1422.0 770.8 L1424.0 753.8 L1426.1 743.1 L1428.1 751.6 L1430.2 729.5 L1432.2 722.8 L1434.3 731.6 L1436.3 710.3 L1438.3 708.2 L1440.4 696.2 L1442.4 698.5 L1444.5 682.9 L1446.5 675.7 L1448.6 688.3 L1450.6 681.0 L1452.7 658.4 L1454.7 644.5 L1456.8 657.0 L1458.8 645.2 L1460.9 635.3 L1462.9 636.2 L1465.0 628.7 L1467.0 618.8 L1469.0 624.4 L1471.0 621.6 L1473.0 613.1 L1475.0 622.4 L1477.0 618.9 L1479.0 604.5 L1481.0 629.3 L1483.0 609.9 L1485.0 603.4 L1487.0 617.2 L1489.0 619.3 L1491.0 598.6 L1493.0 617.2 L1495.0 618.1 L1497.0 608.8 L1499.0 598.9 L1501.0 618.6 L1503.0 610.2 L1505.0 609.0 L1507.0 591.0 L1509.0 603.8 L1511.0 588.6 L1513.0 611.4 L1515.0 604.8 L1517.0 593.2 L1519.0 584.4 L1521.0 598.5 L1523.0 605.4 L1525.0 608.2 L1527.0 593.3 L1529.0 604.1 L1531.0 582.2 L1533.0 580.3 L1535.0 601.9 L1537.0 597.9 L1539.0 589.4 L1541.0 571.8 L1543.0 566.7 L1545.0 552.8 L1547.0 555.5 L1549.0 551.7 L1551.0 537.9 L1553.0 515.1 L1555.0 519.4 L1557.0 507.9 L1559.0 496.6 L1561.0 487.0 L1563.0 477.7 L1565.0 454.7 L1567.0 465.4 L1569.0 459.9 L1571.0 425.6 L1573.0 417.8 L1575.0 418.3 L1577.0 401.3 L1579.0 417.3 L1581.0 399.4 L1583.0 398.6 L1585.0 419.4 L1587.0 401.3 L1589.0 396.9 L1591.0 400.8 L1593.0 403.9 L1595.0 409.6 L1597.0 406.4 L1599.0 408.5 L1601.0 412.0 L1603.0 394.0 L1605.0 402.0 L1607.0 383.9 L1609.0 406.6 L1611.0 377.8 L1613.0 383.0 L1615.0 374.1 L1617.0 373.5 L1619.0 371.8 L1621.0 380.5 L1623.0 396.8 L1625.0 372.1 L1627.0 388.7 L1629.0 383.1 L1631.0 375.3 L1633.0 795.8 L1635.0 795.7 L1637.0 795.6 L1639.0 795.5 L1641.0 795.3 L1643.0 795.2 L1645.0 795.1 L1647.0 795.0 L1649.0 794.9 L1651.0 794.8 L1653.0 794.6 L1655.0 794.5 L1657.0 794.4 L1659.0 794.3 L1661.0 794.2 L1663.0 794.1 L1665.0 794.0 L1667.0 793.8 L1669.0 782.9 L1671.1 780.0 L1673.1 776.3 L1675.1 755.8 L1677.2 757.8 L1679.2 758.4 L1681.2 754.1 L1683.3 731.4 L1685.3 735.0 L1687.3 720.3 L1689.4 725.0 L1691.4 722.5 L1693.4 707.0 L1695.5 692.9 L1697.5 703.4 L1699.6 680.4 L1701.6 670.3 L1703.6 666.8 L1705.7 659.7 L1707.7 674.7 L1709.7 651.6 L1711.8 638.9 L1713.8 653.7 L1715.8 641.2 L1717.9 634.7 L1719.9 621.3 L1721.9 617.4 L1724.0 609.5 L1726.0 602.2 L1728.0 591.7 L1730.1 617.4 L1732.1 614.7 L1734.2 611.3 L1736.2 610.5 L1738.3 611.5 L1740.3 579.4 L1742.4 582.7 L1744.4 608.1 L1746.5 592.9 L1748.5 598.4 L1750.6 597.5 L1752.6 595.3 L1754.7 584.3 L1756.7 585.4 L1758.8 592.3 L1760.8 597.2 L1762.8 591.5 L1764.9 597.7 L1766.9 581.9 L1769.0 575.5 L1771.0 586.1 L1773.1 595.5 L1775.1 591.2 L1777.2 583.6 L1779.2 574.7 L1781.3 567.7 L1783.3 580.6 L1785.4 565.2 L1787.4 570.4 L1789.5 576.1 L1791.5 572.8 L1793.5 565.3 L1795.6 551.2 L1797.6 534.8 L1799.6 531.4 L1801.7 513.3 L1803.7 508.6 L1805.7 503.4 L1807.8 484.8 L1809.8 469.7 L1811.8 475.3 L1813.8 455.1 L1815.9 444.2 L1817.9 421.3 L1819.9 409.0 L1822.0 412.9 L1824.0 398.7 L1826.0 384.9 L1828.1 387.0 L1830.1 402.5 L1832.1 394.8 L1834.1 404.3 L1836.2 381.2 L1838.2 384.7 L1840.2 376.3 L1842.3 378.1 L1844.3 380.8 L1846.3 377.4 L1848.4 381.5 L1850.4 394.9 L1852.4 378.2 L1854.4 395.4 L1856.5 389.8 L1858.5 368.5 L1860.5 390.4 L1862.6 387.6 L1864.6 386.1 L1866.6 360.1 L1868.6 381.1 L1870.7 384.7 L1872.7 357.5 L1874.7 379.1 L1876.8 354.9 L1878.8 359.1 L1880.8 352.6 L1882.9 347.7 L1884.9 358.3 L1886.9 350.0 L1888.9 372.9 L1891.0 348.5 L1893.0 355.7 L1894.0 795.8 L1896.0 795.8 L1898.0 795.8 L1900.1 795.8 L1902.1 795.8 L1904.1 795.8 L1906.2 795.8 L1908.2 795.8 L1910.2 795.8 L1912.2 795.8 L1914.2 795.8 L1916.3 795.8 L1918.3 795.8 L1920.3 795.8 L1922.4 795.8 L1924.4 795.8 L1926.4 795.8 L1928.4 788.6 L1930.5 776.4 L1932.5 785.6 L1934.6 761.7 L1936.6 749.9 L1938.6 766.1 L1940.7 752.3 L1942.7 739.1 L1944.7 725.2 L1946.8 733.8 L1948.8 728.6 L1950.9 719.9 L1952.9 703.3 L1954.9 692.8 L1957.0 695.4 L1959.0 689.3 L1961.1 681.6 L1963.1 676.0 L1965.1 667.3 L1967.2 669.3 L1969.2 651.4 L1971.3 632.0 L1973.3 639.9 L1975.3 624.2 L1977.4 632.8 L1979.4 611.9 L1981.4 603.3 L1983.5 598.6 L1985.5 595.9 L1987.6 589.9 L1989.6 582.6 L1991.6 576.5 L1993.7 566.5 L1995.7 591.0 L1997.8 591.6 L1999.8 568.0 L2001.9 561.0 L2003.9 573.4 L2005.9 574.8 L2008.0 564.1 L2010.0 581.1 L2012.1 577.1 L2014.1 578.3 L2016.2 563.8 L2018.2 571.8 L2020.3 573.4 L2022.3 556.5 L2024.3 546.2 L2026.4 567.6 L2028.4 552.3 L2030.5 561.1 L2032.5 544.8 L2034.6 552.8 L2036.6 562.5 L2038.7 563.0 L2040.7 568.4 L2042.7 551.5 L2044.8 553.6 L2046.8 559.6 L2048.9 551.9 L2050.9 552.0 L2053.0 535.3 L2055.0 543.5 L2057.0 544.3 L2059.0 513.3 L2061.0 518.3 L2063.0 506.5 L2065.0 501.4 L2067.0 483.1 L2069.0 474.9 L2071.0 473.3 L2073.0 466.7 L2075.0 451.8 L2077.0 439.6 L2079.0 443.1 L2081.0 425.7 L2083.0 411.1 L2085.0 415.6 L2087.0 413.3 L2089.0 404.5 L2091.0 389.0 L2093.0 380.7 L2095.1 380.7 L2097.1 370.4 L2099.1 372.3 L2101.2 390.4 L2103.2 390.7 L2105.2 387.2 L2107.3 388.1 L2109.3 370.3 L2111.3 364.1 L2113.4 361.4 L2115.4 380.5 L2117.4 359.8 L2119.5 376.0 L2121.5 371.1 L2123.6 360.1 L2125.6 379.1 L2127.6 377.6 L2129.7 352.7 L2131.7 368.6 L2133.7 365.2 L2135.8 356.7 L2137.8 352.4 L2139.8 372.2 L2141.9 360.5 L2143.9 355.9 L2145.9 353.0 L2148.0 360.4 L2150.0 349.8 L2151.0 795.8 L2153.0 795.8 L2155.0 795.8 L2157.1 795.8 L2159.1 795.8 L2161.1 795.8 L2163.1 795.8 L2165.1 795.8 L2167.1 795.8 L2169.2 795.8 L2171.2 795.8 L2173.2 795.8 L2175.2 795.8 L2177.2 795.8 L2179.2 795.8 L2181.3 795.8 L2183.3 795.8 L2185.3 795.8 L2187.3 787.2 L2189.4 771.1 L2191.4 779.7 L2193.4 769.3 L2195.4 774.2 L2197.5 763.7 L2199.5 747.1 L2201.5 755.3 L2203.5 728.5 L2205.6 721.6 L2207.6 736.7 L2209.6 708.1 L2211.6 716.7 L2213.7 699.9 L2215.7 693.9 L2217.7 699.8 L2219.7 683.4 L2221.8 677.6 L2223.8 667.3 L2225.8 675.2 L2227.8 656.0 L2229.9 644.2 L2231.9 645.4 L2233.9 642.7 L2235.9 647.5 L2238.0 631.2 L2240.0 624.6 L2242.0 628.7 L2244.0 615.2 L2246.0 615.6 L2248.0 618.5 L2250.0 630.7 L2252.0 613.8 L2254.0 613.3 L2256.0 627.8 L2258.0 602.5 L2260.0 609.5 L2262.0 626.8 L2264.0 598.1 L2266.0 624.2 L2268.0 616.7 L2270.0 602.4 L2272.0 605.7 L2274.0 606.1 L2276.0 602.0 L2278.0 607.5 L2280.0 611.5 L2282.0 615.2 L2284.0 617.9 L2286.0 594.7 L2288.0 592.4 L2290.0 598.7 L2292.0 591.0 L2294.0 603.1 L2296.0 605.3 L2298.0 600.3 L2300.0 582.5 L2302.0 610.1 L2304.0 593.2 L2306.0 592.4 L2308.0 587.1 L2310.1 561.4 L2312.1 560.5 L2314.2 549.1 L2316.2 535.3 L2318.2 519.8 L2320.3 501.8 L2322.3 500.9 L2324.3 475.9 L2326.4 483.4 L2328.4 467.3 L2330.4 459.9 L2332.5 447.7 L2334.5 418.1 L2336.6 407.6 L2338.6 401.7 L2340.6 410.2 L2342.7 408.6 L2344.7 399.9 L2346.8 388.0 L2348.8 384.3 L2350.8 384.9 L2352.9 388.4 L2354.9 401.0 L2357.0 391.6 L2359.0 396.6 L2361.0 384.5 L2363.1 381.7 L2365.1 391.9 L2367.2 388.8 L2369.2 370.5 L2371.2 392.9 L2373.3 366.9 L2375.3 362.6 L2377.4 359.3 L2379.4 375.7 L2381.4 368.9 L2383.5 366.5 L2385.5 363.4 L2387.6 351.0 L2389.6 358.7 L2391.6 369.5 L2393.7 350.3 L2395.7 360.7 L2397.8 355.5 L2399.8 350.0 L2401.8 371.5 L2403.9 345.7 L2405.9 347.7 L2408.0 351.6 L2410.0 349.8 L2411.0 795.8 L2413.0 795.8 L2415.0 795.8 L2417.0 795.8 L2419.0 795.8 L2421.0 795.8 L2423.0 795.8 L2425.0 795.8 L2427.0 795.8 L2429.0 795.8 L2431.0 795.8 L2433.0 795.8 L2435.0 795.8 L2437.0 795.8 L2439.0 795.8 L2441.0 795.8 L2443.0 795.8 L2445.1 788.3 L2447.1 783.1 L2449.2 783.3 L2451.2 767.5 L2453.3 773.6 L2455.3 754.5 L2457.4 743.8 L2459.4 742.3 L2461.5 732.2 L2463.5 714.9 L2465.6 709.8 L2467.6 722.9 L2469.7 698.7 L2471.7 696.3 L2473.8 704.5 L2475.8 689.5 L2477.9 686.0 L2479.9 683.2 L2482.0 664.1 L2484.0 646.9 L2486.1 656.1 L2488.1 634.8 L2490.2 632.5 L2492.2 640.4 L2494.3 614.4 L2496.3 614.4 L2498.4 598.9 L2500.4 597.6 L2502.5 590.1 L2504.5 593.7 L2506.6 574.6 L2508.6 564.4 L2510.7 568.9 L2512.7 555.8 L2514.8 569.7 L2516.8 558.0 L2518.9 566.6 L2520.9 578.8 L2522.9 580.4 L2525.0 578.5 L2527.0 573.6 L2529.1 574.2 L2531.1 562.0 L2533.1 554.3 L2535.2 559.2 L2537.2 562.4 L2539.3 553.9 L2541.3 565.1 L2543.3 558.9 L2545.4 548.1 L2547.4 559.6 L2549.5 566.5 L2551.5 541.1 L2553.6 546.6 L2555.6 558.0 L2557.6 557.2 L2559.7 551.0 L2561.7 548.0 L2563.8 560.1 L2565.8 567.0 L2567.8 559.2 L2569.9 538.8 L2571.9 560.1 L2574.0 548.5 L2576.0 546.4 L2578.0 544.6 L2580.1 534.4 L2582.1 525.6 L2584.2 509.6 L2586.2 506.0 L2588.2 499.9 L2590.3 487.8 L2592.3 476.5 L2594.4 458.1 L2596.4 459.7 L2598.5 450.8 L2600.5 429.7 L2602.5 421.0 L2604.6 403.3 L2606.6 410.7 L2608.7 391.6 L2610.7 379.2 L2612.7 381.0 L2614.7 391.3 L2616.8 360.1 L2618.8 382.3 L2620.8 384.9 L2622.8 371.4 L2624.8 379.8 L2626.9 363.8 L2628.9 371.1 L2630.9 376.7 L2632.9 377.6 L2634.9 354.7 L2637.0 367.7 L2639.0 350.0 L2641.0 357.7" fill="none" stroke="#2b6693" stroke-width="2.1" stroke-linejoin="round"/><path d="M1110.6 1234.1 L1113.5 1241.6 L1116.4 1252.4 L1118.0 1323.4 L1120.0 1323.4 L1122.1 1323.4 L1124.1 1323.4 L1126.1 1323.4 L1128.2 1323.4 L1130.2 1323.4 L1132.2 1323.4 L1134.3 1323.4 L1136.3 1323.4 L1138.3 1323.4 L1140.4 1323.4 L1142.4 1323.4 L1144.4 1323.4 L1146.5 1323.4 L1148.5 1323.4 L1150.6 1306.6 L1152.7 1292.0 L1154.9 1276.2 L1157.0 1264.4 L1159.1 1248.3 L1161.2 1244.2 L1163.3 1225.3 L1165.5 1205.9 L1167.6 1195.1 L1169.7 1178.2 L1171.8 1172.9 L1173.9 1154.8 L1176.1 1143.3 L1178.2 1125.9 L1180.3 1112.3 L1182.4 1111.2 L1184.4 1121.5 L1186.5 1118.2 L1188.6 1117.3 L1190.6 1106.2 L1192.7 1109.2 L1194.7 1120.3 L1196.8 1109.2 L1198.9 1121.2 L1200.9 1113.0 L1203.0 1115.3 L1205.0 1113.4 L1207.1 1108.8 L1209.1 1093.0 L1211.2 1094.3 L1213.2 1088.2 L1215.3 1073.6 L1217.3 1068.8 L1219.3 1069.2 L1221.4 1055.6 L1223.4 1054.3 L1225.5 1046.7 L1227.5 1045.9 L1229.6 1031.6 L1231.6 1028.4 L1233.6 1019.2 L1235.7 1014.0 L1237.7 1014.6 L1239.8 1007.8 L1241.8 1003.9 L1243.8 998.1 L1245.9 992.9 L1247.9 984.2 L1250.0 974.8 L1252.0 975.4 L1254.1 961.9 L1256.1 959.6 L1258.1 953.8 L1260.2 942.1 L1262.2 939.8 L1264.3 935.6 L1266.3 927.7 L1268.4 919.1 L1270.4 915.4 L1272.4 924.5 L1274.4 906.2 L1276.5 925.5 L1278.5 911.1 L1280.5 909.3 L1282.5 926.1 L1284.6 910.8 L1286.6 919.5 L1288.6 915.4 L1290.6 927.0 L1292.7 926.4 L1294.7 923.9 L1296.7 908.6 L1298.7 924.0 L1300.8 912.9 L1302.8 909.6 L1304.8 918.4 L1306.9 919.8 L1309.0 935.1 L1311.1 942.3 L1313.2 947.4 L1315.3 951.3 L1317.4 967.6 L1319.5 966.3 L1321.7 973.0 L1323.8 979.5 L1325.9 997.8 L1328.0 993.0 L1330.1 1011.8 L1332.2 1015.7 L1334.3 1020.9 L1336.7 1051.4 L1339.2 1079.3 L1341.6 1119.0 L1344.0 1148.8 L1346.1 1153.6 L1348.2 1169.2 L1350.3 1182.9 L1352.5 1193.3 L1354.6 1205.7 L1356.7 1217.5 L1358.8 1227.1 L1360.9 1230.4 L1363.0 1236.8 L1365.1 1258.5 L1367.3 1270.5 L1369.4 1268.4 L1371.5 1285.0 L1373.6 1296.0 L1376.3 1323.4 L1378.3 1323.4 L1380.4 1323.4 L1382.4 1323.4 L1384.5 1323.4 L1386.5 1323.4 L1388.6 1323.4 L1390.6 1323.4 L1392.7 1323.4 L1394.7 1323.4 L1396.8 1323.4 L1398.8 1323.4 L1400.9 1323.4 L1402.9 1323.4 L1405.0 1323.4 L1407.0 1323.4 L1409.1 1310.7 L1411.2 1298.9 L1413.3 1281.2 L1415.4 1264.8 L1417.4 1255.2 L1419.5 1241.9 L1421.6 1232.2 L1423.7 1208.9 L1425.8 1205.0 L1427.9 1186.1 L1430.0 1168.6 L1432.1 1162.7 L1434.1 1142.3 L1436.2 1126.1 L1438.3 1116.0 L1440.4 1100.5 L1442.5 1090.0 L1444.6 1097.0 L1446.8 1091.1 L1448.9 1096.2 L1451.0 1083.8 L1453.2 1093.6 L1455.3 1090.8 L1457.4 1081.0 L1459.5 1083.7 L1461.7 1081.4 L1463.8 1090.0 L1465.8 1084.1 L1467.9 1077.3 L1469.9 1068.3 L1472.0 1064.7 L1474.0 1060.4 L1476.1 1052.8 L1478.1 1049.3 L1480.2 1040.3 L1482.2 1027.1 L1484.3 1021.1 L1486.3 1018.4 L1488.4 1013.5 L1490.4 1008.9 L1492.5 1005.3 L1494.5 996.9 L1496.5 984.8 L1498.6 977.5 L1500.6 976.7 L1502.7 965.6 L1504.7 959.4 L1506.8 953.9 L1508.8 947.9 L1510.9 940.4 L1512.9 938.5 L1515.0 928.3 L1517.0 926.6 L1519.1 918.0 L1521.1 908.4 L1523.2 902.9 L1525.2 901.0 L1527.3 887.3 L1529.3 885.9 L1531.3 882.6 L1533.3 883.7 L1535.4 894.9 L1537.4 883.8 L1539.4 889.5 L1541.4 880.7 L1543.5 884.6 L1545.5 877.2 L1547.5 880.3 L1549.5 877.0 L1551.6 885.7 L1553.6 879.5 L1555.6 877.3 L1557.6 875.2 L1559.7 884.5 L1561.7 874.3 L1563.7 880.9 L1565.8 882.9 L1567.9 892.4 L1569.9 895.6 L1572.0 902.9 L1574.1 915.8 L1576.2 922.7 L1578.3 934.6 L1580.3 932.6 L1582.4 938.3 L1584.5 951.5 L1586.6 955.7 L1588.7 962.4 L1590.7 969.3 L1592.8 983.8 L1594.9 986.4 L1596.9 1004.3 L1598.9 1028.6 L1600.9 1049.2 L1602.9 1074.1 L1604.9 1093.0 L1606.9 1112.7 L1608.9 1136.2 L1610.9 1156.7 L1612.9 1181.3 L1614.9 1195.9 L1616.9 1202.3 L1618.9 1206.8 L1620.9 1212.2 L1623.0 1226.2 L1625.0 1228.2 L1627.0 1237.2 L1629.0 1253.3 L1631.0 1255.4 L1633.1 1289.4 L1635.2 1323.4 L1637.3 1323.4 L1639.3 1323.4 L1641.4 1323.4 L1643.5 1323.4 L1645.6 1323.4 L1647.6 1323.4 L1649.7 1323.4 L1651.8 1323.4 L1653.9 1323.4 L1655.9 1323.4 L1658.0 1323.4 L1660.1 1323.4 L1662.2 1323.4 L1664.2 1323.4 L1666.3 1323.4 L1668.3 1309.8 L1670.3 1298.6 L1672.3 1286.6 L1674.4 1271.7 L1676.4 1255.7 L1678.4 1243.3 L1680.4 1229.2 L1682.4 1217.1 L1684.4 1198.3 L1686.4 1185.3 L1688.4 1168.8 L1690.5 1155.1 L1692.5 1145.1 L1694.5 1123.7 L1696.5 1114.3 L1698.6 1123.5 L1700.7 1116.6 L1702.7 1119.1 L1704.8 1117.0 L1706.9 1122.6 L1709.0 1110.1 L1711.1 1118.5 L1713.2 1124.8 L1715.2 1114.8 L1717.3 1124.3 L1719.4 1117.4 L1721.4 1110.9 L1723.4 1107.3 L1725.5 1098.6 L1727.5 1088.5 L1729.5 1084.1 L1731.5 1082.6 L1733.6 1072.3 L1735.6 1068.2 L1737.6 1065.3 L1739.6 1061.9 L1741.7 1050.9 L1743.7 1045.4 L1745.7 1035.0 L1747.7 1029.0 L1749.8 1027.0 L1751.8 1024.0 L1753.8 1012.0 L1755.8 1016.0 L1757.8 1008.9 L1759.9 997.8 L1761.9 991.3 L1763.9 990.7 L1765.9 979.3 L1768.0 970.4 L1770.0 970.2 L1772.0 963.7 L1774.0 960.0 L1776.1 953.3 L1778.1 939.8 L1780.1 940.5 L1782.1 928.0 L1784.2 922.6 L1786.2 920.2 L1788.2 915.4 L1790.3 919.9 L1792.4 905.0 L1794.4 914.4 L1796.5 915.7 L1798.6 917.3 L1800.7 903.6 L1802.8 913.2 L1804.8 917.0 L1806.9 912.8 L1809.0 919.6 L1811.1 909.2 L1813.2 912.4 L1815.2 915.1 L1817.3 905.0 L1819.4 910.3 L1821.5 912.4 L1823.6 929.7 L1825.7 929.2 L1827.8 939.1 L1829.9 936.7 L1832.0 945.2 L1834.2 958.9 L1836.3 965.0 L1838.4 973.0 L1840.5 968.3 L1842.6 984.0 L1844.7 986.3 L1846.8 994.5 L1848.9 1000.6 L1851.0 1022.3 L1853.1 1046.5 L1855.2 1068.3 L1857.3 1100.3 L1859.5 1115.4 L1861.6 1145.2 L1863.7 1165.7 L1865.8 1192.0 L1867.9 1216.2 L1870.0 1237.1 L1872.2 1246.3 L1874.4 1256.8 L1876.6 1267.7 L1878.8 1272.2 L1880.9 1283.8 L1883.1 1300.9 L1885.3 1307.5 L1887.5 1314.4 L1889.7 1323.4 L1891.8 1323.4 L1893.9 1323.4 L1895.9 1323.4 L1898.0 1323.4 L1900.1 1323.4 L1902.2 1323.4 L1904.2 1323.4 L1906.3 1323.4 L1908.4 1323.4 L1910.5 1323.4 L1912.5 1323.4 L1914.6 1323.4 L1916.7 1323.4 L1918.8 1323.4 L1920.8 1323.4 L1922.9 1323.4 L1925.0 1323.4 L1927.0 1306.3 L1929.0 1294.2 L1931.0 1285.5 L1933.1 1279.0 L1935.1 1258.0 L1937.1 1249.5 L1939.1 1235.4 L1941.1 1221.5 L1943.1 1209.9 L1945.1 1199.1 L1947.1 1181.8 L1949.2 1175.3 L1951.2 1162.7 L1953.2 1145.2 L1955.2 1136.6 L1957.3 1141.7 L1959.5 1139.7 L1961.6 1129.8 L1963.8 1143.1 L1965.9 1129.1 L1968.0 1131.3 L1970.2 1135.7 L1972.3 1138.0 L1974.4 1128.8 L1976.6 1126.2 L1978.7 1139.6 L1980.9 1133.3 L1983.0 1132.6 L1985.0 1126.4 L1987.0 1121.4 L1989.1 1117.7 L1991.1 1114.1 L1993.1 1103.7 L1995.1 1095.6 L1997.2 1098.3 L1999.2 1090.9 L2001.2 1078.8 L2003.2 1073.5 L2005.3 1069.3 L2007.3 1070.9 L2009.3 1057.5 L2011.3 1049.1 L2013.3 1043.3 L2015.4 1041.0 L2017.4 1042.7 L2019.4 1028.3 L2021.4 1029.6 L2023.5 1019.3 L2025.5 1010.3 L2027.5 1007.4 L2029.5 1008.3 L2031.6 1000.9 L2033.6 988.4 L2035.6 991.3 L2037.6 980.6 L2039.7 977.2 L2041.7 974.5 L2043.7 965.1 L2045.8 962.3 L2047.9 973.6 L2050.0 971.9 L2052.1 966.1 L2054.2 971.9 L2056.3 971.8 L2058.4 961.1 L2060.6 957.3 L2062.7 954.2 L2064.8 968.8 L2066.9 962.5 L2069.0 964.5 L2071.1 958.4 L2073.2 960.0 L2075.2 966.4 L2077.3 966.6 L2079.3 980.4 L2081.4 990.8 L2083.4 988.5 L2085.5 1002.0 L2087.5 1001.8 L2089.6 1009.7 L2091.7 1010.5 L2093.7 1021.5 L2095.8 1026.8 L2097.8 1037.8 L2099.8 1040.2 L2101.9 1050.4 L2103.9 1049.9 L2106.0 1059.5 L2108.0 1083.0 L2110.0 1111.8 L2112.0 1134.1 L2114.0 1156.0 L2116.0 1174.7 L2118.0 1205.9 L2120.0 1222.4 L2122.0 1246.9 L2124.0 1272.7 L2126.0 1283.8 L2128.0 1281.7 L2130.0 1295.0 L2132.0 1300.2 L2134.0 1299.6 L2136.0 1310.0 L2138.0 1307.1 L2140.0 1318.0 L2142.0 1323.4 L2144.0 1323.4 L2146.0 1323.4 L2148.0 1323.4 L2150.0 1323.4 L2152.0 1323.4 L2154.0 1323.4 L2156.0 1323.4 L2158.0 1323.4 L2160.0 1323.4 L2162.0 1323.4 L2164.0 1323.4 L2166.0 1323.4 L2168.0 1323.4 L2170.0 1323.4 L2172.0 1323.4 L2174.0 1323.4 L2176.0 1323.4 L2178.0 1323.4 L2180.0 1323.4 L2182.0 1323.4 L2184.0 1323.4 L2186.0 1312.2 L2188.1 1293.7 L2190.1 1289.1 L2192.2 1268.1 L2194.2 1262.4 L2196.3 1248.1 L2198.3 1226.0 L2200.3 1215.8 L2202.4 1207.7 L2204.4 1195.7 L2206.5 1173.0 L2208.5 1163.2 L2210.6 1148.3 L2212.6 1142.7 L2214.7 1124.1 L2216.7 1112.3 L2218.8 1115.2 L2220.9 1117.6 L2223.0 1116.1 L2225.1 1111.4 L2227.2 1116.4 L2229.2 1116.0 L2231.3 1120.7 L2233.4 1108.6 L2235.5 1112.1 L2237.6 1109.6 L2239.7 1115.3 L2241.7 1109.6 L2243.8 1098.4 L2245.8 1095.6 L2247.9 1088.3 L2249.9 1082.0 L2251.9 1073.6 L2254.0 1070.9 L2256.0 1067.8 L2258.0 1062.0 L2260.1 1053.6 L2262.1 1048.9 L2264.2 1032.9 L2266.2 1030.9 L2268.2 1021.3 L2270.3 1023.3 L2272.3 1011.5 L2274.3 1000.3 L2276.4 996.8 L2278.4 992.5 L2280.5 985.6 L2282.5 983.1 L2284.5 976.0 L2286.6 969.4 L2288.6 960.5 L2290.7 953.9 L2292.7 941.9 L2294.7 943.5 L2296.8 935.8 L2298.8 929.1 L2300.8 923.9 L2302.9 916.0 L2304.9 910.0 L2307.0 900.8 L2309.0 894.1 L2311.0 903.1 L2313.1 884.8 L2315.1 895.6 L2317.1 883.8 L2319.2 888.5 L2321.2 888.4 L2323.2 892.1 L2325.3 882.2 L2327.3 898.5 L2329.4 887.1 L2331.4 894.3 L2333.4 886.2 L2335.5 884.8 L2337.5 895.8 L2339.5 894.7 L2341.6 897.9 L2343.6 888.0 L2345.6 898.9 L2347.7 908.2 L2349.7 911.2 L2351.8 910.8 L2353.8 926.3 L2355.9 934.3 L2357.9 939.5 L2359.9 949.2 L2362.0 950.5 L2364.0 958.0 L2366.1 972.7 L2368.1 979.0 L2370.2 980.5 L2372.2 984.2 L2374.3 995.4 L2376.3 1004.7 L2378.4 1032.7 L2380.5 1052.6 L2382.6 1092.6 L2384.7 1119.0 L2386.8 1136.5 L2388.9 1168.6 L2391.0 1194.5 L2393.2 1208.1 L2395.4 1209.0 L2397.6 1210.6 L2399.8 1224.5 L2401.9 1234.3 L2404.1 1245.3 L2406.3 1253.1 L2408.5 1249.6 L2410.7 1262.5 L2412.4 1323.4 L2414.4 1323.4 L2416.5 1323.4 L2418.5 1323.4 L2420.6 1323.4 L2422.6 1323.4 L2424.6 1323.4 L2426.7 1323.4 L2428.7 1323.4 L2430.8 1323.4 L2432.8 1323.4 L2434.8 1323.4 L2436.9 1323.4 L2438.9 1323.4 L2441.0 1323.4 L2443.0 1323.4 L2445.1 1309.5 L2447.2 1290.5 L2449.2 1286.3 L2451.3 1270.2 L2453.4 1258.3 L2455.5 1240.4 L2457.6 1230.2 L2459.7 1214.0 L2461.7 1198.3 L2463.8 1185.4 L2465.9 1174.2 L2468.0 1160.3 L2470.1 1135.9 L2472.1 1130.7 L2474.2 1113.0 L2476.3 1099.1 L2478.4 1100.8 L2480.4 1098.5 L2482.5 1106.5 L2484.5 1102.4 L2486.6 1106.1 L2488.7 1098.3 L2490.7 1091.6 L2492.8 1097.3 L2494.8 1092.7 L2496.9 1104.2 L2498.9 1107.7 L2501.0 1099.1 L2503.0 1092.6 L2505.1 1087.2 L2507.1 1080.2 L2509.2 1076.4 L2511.2 1067.6 L2513.3 1060.4 L2515.3 1052.3 L2517.3 1053.0 L2519.4 1045.4 L2521.4 1035.2 L2523.5 1035.9 L2525.5 1031.1 L2527.6 1022.8 L2529.6 1019.3 L2531.7 1005.6 L2533.7 999.1 L2535.7 998.7 L2537.8 994.7 L2539.8 989.2 L2541.9 981.4 L2543.9 977.2 L2546.0 967.3 L2548.0 959.6 L2550.1 957.3 L2552.1 953.3 L2554.1 940.2 L2556.2 941.4 L2558.2 933.7 L2560.3 926.7 L2562.3 919.7 L2564.4 916.7 L2566.4 906.2 L2568.5 908.6 L2570.6 911.6 L2572.7 903.6 L2574.9 908.3 L2577.0 902.3 L2579.1 907.9 L2581.2 906.6 L2583.3 911.1 L2585.4 914.6 L2587.5 907.8 L2589.7 911.9 L2591.8 906.7 L2593.9 912.0 L2596.0 917.4 L2598.1 920.5 L2600.3 932.1 L2602.4 930.6 L2604.6 942.1 L2606.7 951.2 L2608.8 957.9 L2611.0 962.3 L2613.1 966.8 L2615.2 967.0 L2617.4 978.1 L2619.5 986.8 L2621.7 983.2 L2623.8 992.5 L2625.8 1016.7 L2627.9 1048.8 L2629.9 1073.5 L2631.9 1097.4 L2633.9 1119.4 L2635.9 1137.7 L2638.0 1161.5 L2640.0 1192.5" fill="none" stroke="#ef9d3b" stroke-width="2.1" stroke-linejoin="round"/></svg>
<div style="left:1110.0px;top:1330.3px;width:1534.5px;height:3.0px;background:#222;"></div>
<div style="left:1109.5px;top:1330.3px;width:2.3px;height:9.7px;background:#222;"></div>
<div style="left:2642.5px;top:1330.3px;width:2.3px;height:9.7px;background:#222;"></div>
<div style="left:1188.4px;top:1330.3px;width:2.4px;height:9.7px;background:#222;"></div>
<div style="left:1163.9px;top:1343.4px;font-size:20px;line-height:20px;color:#333;transform:scaleX(1.0270);transform-origin:0 0;white-space:nowrap;">04:00</div>
<div style="left:1379.6px;top:1330.3px;width:2.4px;height:9.7px;background:#222;"></div>
<div style="left:1355.1px;top:1343.4px;font-size:20px;line-height:20px;color:#333;transform:scaleX(1.0270);transform-origin:0 0;white-space:nowrap;">05:00</div>
<div style="left:1571.5px;top:1330.3px;width:2.4px;height:9.7px;background:#222;"></div>
<div style="left:1547.0px;top:1343.4px;font-size:20px;line-height:20px;color:#333;transform:scaleX(1.0270);transform-origin:0 0;white-space:nowrap;">06:00</div>
<div style="left:1763.4px;top:1330.3px;width:2.4px;height:9.7px;background:#222;"></div>
<div style="left:1738.9px;top:1343.4px;font-size:20px;line-height:20px;color:#333;transform:scaleX(1.0270);transform-origin:0 0;white-space:nowrap;">07:00</div>
<div style="left:1955.3px;top:1330.3px;width:2.4px;height:9.7px;background:#222;"></div>
<div style="left:1930.8px;top:1343.4px;font-size:20px;line-height:20px;color:#333;transform:scaleX(1.0270);transform-origin:0 0;white-space:nowrap;">08:00</div>
<div style="left:2146.8px;top:1330.3px;width:2.4px;height:9.7px;background:#222;"></div>
<div style="left:2122.3px;top:1343.4px;font-size:20px;line-height:20px;color:#333;transform:scaleX(1.0270);transform-origin:0 0;white-space:nowrap;">09:00</div>
<div style="left:2338.8px;top:1330.3px;width:2.4px;height:9.7px;background:#222;"></div>
<div style="left:2314.3px;top:1343.4px;font-size:20px;line-height:20px;color:#333;transform:scaleX(1.0270);transform-origin:0 0;white-space:nowrap;">10:00</div>
<div style="left:2530.7px;top:1330.3px;width:2.4px;height:9.7px;background:#222;"></div>
<div style="left:2506.2px;top:1343.4px;font-size:20px;line-height:20px;color:#333;transform:scaleX(1.0584);transform-origin:0 0;white-space:nowrap;">11:00</div>
<div style="left:1110.5px;top:1380.5px;width:62.7px;height:62.8px;background:#fff;border:2px solid #dcdcdc;border-radius:8px;box-sizing:border-box;"></div>
<svg style="left:1137.0px;top:1405.0px;" width="8" height="14" viewBox="0 0 8 14"><polygon points="7,0 7,13 0,6.5" fill="#555"/></svg>
<div style="left:1182.5px;top:1380.5px;width:64.7px;height:62.8px;background:#fff;border:2px solid #dcdcdc;border-radius:8px;box-sizing:border-box;"></div>
<svg style="left:1200.0px;top:1395.0px;" width="30" height="32" viewBox="0 0 30 32"><rect x="2" y="4" width="25" height="27" rx="1.5" fill="none" stroke="#888" stroke-width="2.6"/><line x1="2" y1="11" x2="27" y2="11" stroke="#888" stroke-width="2.6"/><rect x="7" y="0" width="3" height="6" fill="#888"/><rect x="19" y="0" width="3" height="6" fill="#888"/><rect x="16" y="18" width="8" height="8" fill="#888"/></svg>
<div style="left:1256.3px;top:1380.5px;width:65.0px;height:62.8px;background:#fff;border:2px solid #cfd7e0;border-radius:8px;box-sizing:border-box;"></div>
<svg style="left:1273.5px;top:1397.0px;" width="30" height="30" viewBox="0 0 30 30"><circle cx="15" cy="15" r="13" fill="none" stroke="#888" stroke-width="2.6"/><polyline points="14,7 14,16 22,16" fill="none" stroke="#888" stroke-width="2.6"/></svg>
<div style="left:1702.8px;top:1380.5px;width:62.2px;height:62.8px;background:#fff;border:2px solid #dcdcdc;border-radius:8px;box-sizing:border-box;"></div>
<svg style="left:1716.0px;top:1394.0px;" width="34" height="34" viewBox="0 0 34 34"><g stroke="#555" fill="none"><polyline points="3,2 3,30 31.5,30" stroke-width="2"/><path d="M4.5 15 Q8 9 15 10.5 Q23 12 26.5 5" stroke-width="3"/><line x1="4" y1="15" x2="29" y2="15" stroke-width="2"/><polyline points="4,28 7.5,28 7.5,25 12,25 12,22 16.5,22 16.5,19 26,19" stroke-width="2"/></g></svg>
<div style="left:1774.6px;top:1380.5px;width:204.4px;height:62.8px;background:#fff;border:2px solid #dcdcdc;border-radius:8px;box-sizing:border-box;"></div>
<div style="left:1915.7px;top:1381.0px;width:2.0px;height:62.0px;background:#dcdcdc;"></div>
<div style="left:1800.5px;top:1396.9px;font-size:27px;line-height:27px;color:#222;transform:scaleX(1.0104);transform-origin:0 0;white-space:nowrap;">8 hours</div>
<svg style="left:1937.0px;top:1396.0px;" width="24" height="31" viewBox="0 0 24 31"><path d="M5 13 L5 8 Q5 2 12 2 Q19 2 19 8" fill="none" stroke="#444" stroke-width="3"/><rect x="2" y="13" width="20" height="16" rx="2" fill="none" stroke="#444" stroke-width="3"/><circle cx="12" cy="21" r="2.2" fill="#444"/></svg>
<div style="left:1988.6px;top:1380.5px;width:62.4px;height:62.8px;background:#fff;border:2px solid #eeeeee;border-radius:8px;box-sizing:border-box;"></div>
<svg style="left:2004.0px;top:1398.0px;" width="30" height="28" viewBox="0 0 30 28"><path d="M7 14 A10 10 0 1 1 10 21" fill="none" stroke="#c8c8c8" stroke-width="3"/><polygon points="1,12 13,12 7,19" fill="#c8c8c8"/><polyline points="17,8 17,15 22,18" fill="none" stroke="#c8c8c8" stroke-width="2.6"/></svg>
<div style="left:2442.6px;top:1380.5px;width:64.4px;height:62.8px;background:#fff;border:2px solid #dcdcdc;border-radius:8px;box-sizing:border-box;"></div>
<svg style="left:2460.0px;top:1395.0px;" width="30" height="32" viewBox="0 0 30 32"><rect x="2" y="4" width="25" height="27" rx="1.5" fill="none" stroke="#888" stroke-width="2.6"/><line x1="2" y1="11" x2="27" y2="11" stroke="#888" stroke-width="2.6"/><rect x="7" y="0" width="3" height="6" fill="#888"/><rect x="19" y="0" width="3" height="6" fill="#888"/><rect x="16" y="18" width="8" height="8" fill="#888"/></svg>
<div style="left:2516.7px;top:1380.5px;width:63.8px;height:62.8px;background:#fff;border:2px solid #cfd7e0;border-radius:8px;box-sizing:border-box;"></div>
<svg style="left:2533.5px;top:1397.0px;" width="30" height="30" viewBox="0 0 30 30"><circle cx="15" cy="15" r="13" fill="none" stroke="#888" stroke-width="2.6"/><polyline points="14,7 14,16 22,16" fill="none" stroke="#888" stroke-width="2.6"/></svg>
<div style="left:2580.5px;top:1380.5px;width:63.5px;height:62.8px;background:#fff;border:2px solid #dcdcdc;border-radius:8px;box-sizing:border-box;"></div>
<svg style="left:2609.0px;top:1405.0px;" width="8" height="14" viewBox="0 0 8 14"><polygon points="0,0 0,13 7,6.5" fill="#555"/></svg>
<div style="left:1110.0px;top:1459.0px;width:1534.0px;height:2.5px;background:#dedede;"></div>
<div style="left:1110.0px;top:1518.6px;width:1534.0px;height:2.0px;background:#dedede;"></div>
<div style="left:1110.0px;top:1460.0px;width:2.0px;height:60.0px;background:#dedede;"></div>
<svg style="left:0;top:0" width="2760" height="1800"><path d="M1111.0 1466.4 L1114.0 1514.9 L1117.3 1465.6 L1120.1 1514.0 L1122.7 1463.3 L1126.0 1514.9 L1128.0 1484.3 L1131.5 1514.1 L1134.0 1463.6 L1137.5 1514.6 L1140.9 1467.6 L1143.6 1515.4 L1146.4 1463.2 L1149.8 1517.1 L1152.1 1487.7 L1155.3 1516.3 L1158.5 1465.4 L1161.9 1517.7 L1165.3 1464.8 L1168.0 1518.0 L1170.6 1463.5 L1173.8 1504.4 L1176.6 1466.7 L1178.9 1516.2 L1181.9 1463.9 L1184.5 1515.4 L1187.4 1463.5 L1189.5 1517.1 L1192.1 1466.4 L1195.6 1502.7 L1199.2 1481.0 L1202.6 1515.5 L1205.0 1463.8 L1207.1 1517.1 L1209.9 1463.3 L1212.2 1515.7 L1214.5 1464.7 L1218.0 1509.2 L1220.7 1467.8 L1223.6 1514.1 L1225.9 1467.0 L1229.3 1515.7 L1232.3 1464.5 L1235.1 1517.1 L1237.1 1467.8 L1239.1 1516.6 L1242.5 1464.3 L1245.1 1512.2 L1247.3 1463.5 L1249.3 1514.6 L1252.7 1463.6 L1255.6 1516.0 L1257.9 1463.9 L1260.5 1516.2 L1262.6 1467.4 L1265.8 1514.0 L1268.6 1466.8 L1270.8 1515.0 L1273.9 1463.2 L1276.6 1517.6 L1279.0 1465.7 L1282.6 1516.4 L1285.4 1467.8 L1287.9 1516.1 L1290.8 1467.1 L1294.4 1515.3 L1298.0 1463.4 L1300.1 1517.0 L1302.8 1463.1 L1305.8 1516.1 L1308.4 1464.1 L1310.5 1515.0 L1313.6 1466.6 L1316.4 1515.5 L1319.1 1467.8 L1321.2 1516.0 L1324.4 1466.9 L1327.4 1516.7 L1330.8 1466.4 L1333.2 1515.5 L1336.2 1467.8 L1339.8 1515.3 L1342.3 1463.7 L1345.2 1515.2 L1348.7 1465.3 L1350.9 1508.4 L1353.2 1466.2 L1356.3 1517.8 L1358.8 1467.2 L1361.0 1514.8 L1364.0 1464.9 L1367.5 1515.7 L1370.5 1463.9 L1373.1 1514.8 L1376.7 1467.1 L1380.2 1514.1 L1383.0 1466.0 L1386.1 1514.0 L1389.0 1464.5 L1391.7 1515.5 L1393.9 1467.1 L1396.8 1514.8 L1399.4 1464.1 L1402.7 1517.7 L1406.2 1465.9 L1408.3 1517.0 L1411.5 1463.3 L1414.8 1516.5 L1417.6 1464.7 L1420.0 1515.2 L1423.0 1463.4 L1425.1 1516.7 L1427.4 1463.3 L1429.4 1516.7 L1432.4 1463.5 L1436.0 1515.6 L1439.1 1465.6 L1441.2 1514.9 L1443.2 1465.7 L1446.2 1516.8 L1449.0 1467.3 L1452.3 1516.7 L1454.7 1467.5 L1457.5 1517.9 L1460.1 1488.6 L1463.4 1515.4 L1466.4 1466.8 L1469.5 1517.7 L1472.3 1464.0 L1476.0 1517.1 L1479.2 1464.8 L1481.3 1514.7 L1484.1 1464.8 L1486.3 1515.7 L1489.2 1466.3 L1491.5 1517.7 L1494.4 1465.6 L1496.6 1515.7 L1499.6 1466.8 L1502.6 1515.7 L1505.2 1464.3 L1508.1 1514.1 L1511.4 1467.0 L1514.6 1518.0 L1517.2 1463.0 L1520.3 1516.3 L1523.9 1464.1 L1527.1 1515.9 L1529.2 1467.1 L1532.0 1515.6 L1535.0 1466.5 L1538.4 1515.5 L1540.8 1467.0 L1544.3 1517.4 L1547.8 1464.5 L1550.8 1517.3 L1553.2 1464.5 L1555.5 1516.0 L1558.7 1466.4 L1561.2 1515.5 L1563.5 1463.3 L1566.6 1514.5 L1570.1 1463.1 L1573.2 1515.8 L1576.0 1476.2 L1579.1 1515.5 L1581.6 1466.2 L1584.3 1514.9 L1587.6 1466.2 L1590.4 1516.3 L1593.3 1465.5 L1595.5 1515.3 L1598.0 1463.2 L1600.3 1516.5 L1603.7 1463.6 L1606.6 1515.6 L1609.8 1466.5 L1612.7 1515.0 L1615.6 1464.0 L1618.6 1516.1 L1621.6 1464.5 L1624.1 1515.4 L1627.4 1465.5 L1630.9 1516.3 L1633.1 1463.4 L1636.7 1516.9 L1639.6 1464.7 L1642.6 1515.6 L1645.9 1464.4 L1648.1 1517.2 L1651.3 1464.5 L1653.4 1515.8 L1655.8 1467.3 L1658.5 1516.5 L1661.2 1464.8 L1663.5 1515.2 L1666.0 1467.6 L1668.7 1514.1 L1671.0 1464.7 L1674.1 1516.6 L1676.8 1465.6 L1679.4 1516.4 L1682.8 1465.4 L1685.3 1517.4 L1687.5 1466.9 L1690.6 1511.7 L1692.9 1475.2 L1695.5 1498.2 L1698.2 1464.4 L1700.6 1516.5 L1703.8 1467.4 L1707.2 1517.9 L1710.0 1465.6 L1713.6 1515.7 L1716.7 1463.6 L1719.3 1514.0 L1721.4 1466.8 L1723.5 1514.4 L1726.3 1465.2 L1729.4 1515.6 L1732.6 1464.7 L1735.8 1517.9 L1738.2 1464.6 L1741.3 1514.5 L1743.8 1475.8 L1746.9 1515.1 L1750.1 1464.7 L1752.4 1514.9 L1754.4 1463.9 L1757.3 1517.4 L1760.7 1463.8 L1763.9 1517.7 L1766.4 1464.1 L1769.0 1517.4 L1772.2 1464.2 L1774.7 1515.7 L1778.2 1469.8 L1781.8 1515.8 L1784.9 1463.9 L1787.9 1511.7 L1791.4 1466.6 L1794.1 1514.7 L1797.0 1467.0 L1800.2 1515.2 L1802.4 1466.1 L1804.5 1513.3 L1807.2 1464.8 L1810.1 1515.8 L1813.4 1464.5 L1816.6 1514.3 L1820.1 1465.1 L1822.6 1515.4 L1825.4 1465.7 L1827.5 1514.8 L1829.9 1464.5 L1833.2 1515.9 L1836.5 1464.6 L1839.5 1516.1 L1842.7 1467.6 L1845.1 1517.9 L1847.9 1463.5 L1851.1 1517.0 L1853.8 1464.2 L1856.2 1516.6 L1859.2 1464.5 L1862.8 1516.2 L1865.9 1465.8 L1869.5 1514.9 L1872.2 1466.4 L1875.3 1516.8 L1878.0 1464.5 L1880.6 1516.7 L1884.2 1481.9 L1887.6 1516.3 L1891.0 1464.8 L1893.6 1515.7 L1895.7 1467.8 L1898.0 1515.3 L1901.3 1466.9 L1903.6 1516.9 L1906.7 1467.8 L1910.1 1517.4 L1913.0 1465.0 L1916.4 1514.2 L1918.6 1465.9 L1921.7 1515.6 L1925.2 1466.4 L1927.5 1514.7 L1929.7 1463.6 L1932.3 1516.2 L1935.6 1463.4 L1938.8 1517.0 L1942.4 1464.3 L1944.9 1515.3 L1947.1 1466.3 L1950.4 1517.5 L1953.7 1466.2 L1955.7 1516.8 L1958.2 1464.4 L1961.4 1517.1 L1965.0 1464.9 L1967.5 1512.2 L1969.8 1466.9 L1973.0 1515.8 L1976.6 1464.4 L1979.7 1517.8 L1982.4 1467.9 L1984.9 1515.0 L1988.2 1465.7 L1991.7 1516.5 L1994.6 1479.3 L1997.4 1517.0 L1999.6 1465.0 L2003.1 1504.4 L2005.8 1464.4 L2008.1 1516.9 L2010.2 1466.0 L2013.4 1517.7 L2015.8 1465.9 L2018.2 1512.5 L2021.3 1464.2 L2024.1 1515.4 L2026.7 1466.3 L2028.7 1514.5 L2032.3 1465.9 L2034.8 1516.8 L2038.2 1464.3 L2041.3 1517.0 L2043.7 1463.7 L2046.7 1514.1 L2049.1 1464.9 L2051.9 1517.9 L2054.3 1466.9 L2057.6 1515.9 L2060.9 1465.4 L2063.9 1515.0 L2067.0 1463.8 L2069.8 1516.6 L2073.3 1465.7 L2076.1 1517.7 L2078.3 1463.2 L2081.3 1514.9 L2084.8 1464.0 L2088.4 1515.3 L2091.8 1464.7 L2094.5 1500.7 L2097.1 1467.1 L2099.3 1515.4 L2102.2 1464.3 L2105.1 1516.3 L2107.7 1464.6 L2109.9 1516.4 L2112.9 1463.8 L2115.9 1516.1 L2119.3 1465.2 L2122.3 1517.5 L2125.2 1465.4 L2128.7 1503.1 L2131.1 1474.3 L2133.1 1515.9 L2136.2 1464.7 L2139.4 1514.7 L2142.5 1466.5 L2145.3 1516.0 L2148.9 1466.6 L2151.7 1515.5 L2153.8 1467.0 L2157.0 1516.2 L2160.7 1467.9 L2162.8 1516.3 L2166.1 1467.0 L2168.7 1517.2 L2171.7 1466.3 L2173.6 1514.5 L2176.9 1466.6 L2178.9 1516.8 L2182.5 1466.1 L2185.1 1514.3 L2187.1 1467.5 L2189.9 1514.5 L2193.0 1464.0 L2196.2 1518.0 L2199.2 1464.7 L2202.4 1516.5 L2205.4 1485.3 L2207.6 1515.4 L2210.2 1464.3 L2213.1 1515.2 L2216.1 1467.9 L2218.3 1516.5 L2221.0 1466.2 L2224.3 1516.9 L2227.2 1467.3 L2229.7 1517.0 L2233.1 1464.8 L2236.5 1516.2 L2239.2 1466.6 L2242.2 1515.4 L2244.9 1464.8 L2247.2 1514.5 L2250.7 1465.2 L2252.9 1516.3 L2255.1 1475.9 L2257.8 1515.5 L2260.2 1463.4 L2262.8 1515.9 L2265.3 1463.3 L2267.8 1517.1 L2270.5 1466.3 L2272.9 1514.8 L2275.9 1466.3 L2279.3 1518.0 L2281.7 1477.8 L2284.2 1517.7 L2287.8 1464.5 L2290.0 1516.7 L2293.1 1463.0 L2296.7 1514.2 L2299.5 1467.1 L2302.3 1517.7 L2304.5 1466.9 L2307.5 1515.4 L2310.5 1488.9 L2314.0 1497.5 L2316.0 1464.2 L2318.8 1517.9 L2321.5 1464.0 L2325.0 1514.6 L2328.6 1466.6 L2331.5 1516.0 L2333.5 1467.3 L2336.1 1515.8 L2338.7 1464.1 L2341.5 1506.2 L2344.8 1464.8 L2347.7 1514.0 L2351.1 1466.3 L2354.7 1515.1 L2357.2 1467.9 L2359.4 1517.6 L2361.9 1466.6 L2363.8 1517.0 L2367.3 1465.3 L2369.5 1514.4 L2372.0 1465.6 L2374.7 1514.9 L2376.8 1463.6 L2380.4 1516.9 L2383.1 1464.5 L2386.7 1515.6 L2389.4 1463.8 L2392.8 1516.3 L2395.7 1463.5 L2398.1 1514.9 L2400.2 1465.1 L2403.4 1517.8 L2405.8 1465.1 L2409.0 1516.2 L2411.8 1464.2 L2414.6 1497.0 L2418.2 1477.9 L2420.3 1517.9 L2422.3 1466.9 L2424.4 1514.6 L2426.6 1464.5 L2429.6 1514.9 L2433.1 1467.0 L2435.6 1516.4 L2438.3 1467.3 L2441.7 1506.2 L2445.2 1466.3 L2447.7 1515.4 L2451.1 1467.3 L2454.5 1514.8 L2457.1 1464.7 L2459.3 1517.2 L2461.4 1467.6 L2464.7 1515.2 L2467.4 1467.6 L2469.4 1517.3 L2471.4 1463.9 L2475.0 1516.4 L2478.4 1465.1 L2481.1 1515.0 L2483.6 1467.4 L2486.9 1515.4 L2489.1 1463.2 L2491.3 1515.8 L2495.0 1464.3 L2497.4 1515.4 L2499.6 1467.5 L2501.9 1515.6 L2505.4 1463.7 L2508.4 1515.8 L2510.5 1463.5 L2512.5 1517.7 L2514.7 1467.1 L2517.0 1517.2 L2519.9 1465.7 L2523.5 1517.9 L2525.5 1465.5 L2527.5 1500.6 L2530.4 1465.1 L2533.6 1515.8 L2536.8 1463.9 L2540.2 1517.7 L2542.7 1463.6 L2545.8 1506.9 L2548.4 1489.3 L2551.8 1514.4 L2554.8 1463.3 L2557.7 1500.1 L2561.0 1488.7 L2563.1 1517.8 L2566.7 1463.9 L2569.8 1514.4 L2572.1 1464.9 L2575.5 1517.6 L2578.7 1466.0 L2581.8 1517.7 L2584.5 1467.3 L2586.5 1514.1 L2589.7 1466.6 L2592.9 1498.4 L2595.5 1465.2 L2597.8 1517.2 L2600.5 1463.7 L2603.2 1515.4 L2606.7 1465.4 L2610.0 1517.4 L2612.7 1463.6 L2615.5 1514.8 L2618.0 1465.3 L2620.8 1507.7 L2624.3 1465.2 L2627.4 1516.3 L2630.4 1464.0 L2633.7 1516.6" fill="none" stroke="#3c8ab7" stroke-width="1.9"/><path d="M1112.5 1471.9 L1114.4 1498.7 L1116.4 1465.7 L1119.7 1518.4 L1122.1 1468.7 L1125.0 1517.5 L1126.9 1466.9 L1129.3 1518.0 L1132.1 1485.3 L1135.5 1517.4 L1138.3 1468.8 L1140.6 1518.3 L1143.5 1468.1 L1146.4 1515.2 L1149.1 1468.6 L1151.8 1516.4 L1154.7 1465.5 L1157.2 1516.0 L1160.0 1466.2 L1162.9 1515.3 L1166.3 1466.2 L1168.8 1518.3 L1171.5 1464.5 L1174.8 1516.9 L1177.2 1465.8 L1179.3 1516.9 L1182.5 1465.0 L1185.4 1516.4 L1188.6 1466.3 L1191.8 1516.8 L1194.6 1484.6 L1197.2 1517.3 L1199.6 1468.1 L1202.4 1495.4 L1205.1 1465.7 L1207.2 1516.5 L1209.5 1468.8 L1211.9 1515.8 L1214.2 1464.9 L1216.5 1516.6 L1218.6 1467.7 L1222.0 1515.1 L1224.4 1464.2 L1226.6 1516.3 L1229.6 1466.3 L1231.9 1515.9 L1233.9 1464.8 L1237.1 1515.2 L1239.8 1464.2 L1242.4 1517.7 L1244.3 1468.9 L1247.5 1516.9 L1249.5 1468.3 L1252.7 1516.3 L1255.6 1468.0 L1258.8 1516.3 L1262.1 1464.9 L1264.3 1517.9 L1267.0 1468.1 L1270.4 1516.4 L1273.7 1465.9 L1276.6 1515.6 L1278.5 1465.2 L1281.2 1498.1 L1283.9 1467.0 L1286.6 1515.1 L1290.0 1468.0 L1293.1 1515.2 L1295.3 1468.7 L1298.6 1517.2 L1301.6 1468.9 L1305.0 1518.2 L1308.1 1465.6 L1310.4 1515.2 L1313.7 1464.1 L1316.1 1516.6 L1318.5 1466.4 L1321.0 1517.8 L1323.3 1468.4 L1326.7 1515.1 L1330.1 1465.1 L1332.1 1516.1 L1334.2 1469.0 L1337.4 1516.7 L1340.5 1464.3 L1342.9 1518.2 L1345.7 1467.2 L1347.6 1517.8 L1350.5 1465.4 L1352.4 1515.5 L1355.0 1465.1 L1357.6 1517.2 L1359.5 1466.9 L1361.8 1517.4 L1365.1 1466.0 L1367.9 1516.4 L1371.2 1468.1 L1373.5 1517.7 L1375.7 1467.4 L1378.4 1515.8 L1381.2 1468.0 L1383.6 1506.6 L1385.8 1464.6 L1388.9 1517.1 L1391.2 1464.6 L1394.1 1515.8 L1396.2 1467.2 L1398.5 1516.5 L1401.6 1468.7 L1404.3 1515.4 L1406.7 1464.9 L1408.7 1515.9 L1411.3 1467.5 L1414.1 1515.6 L1417.3 1464.6 L1419.2 1516.9 L1422.6 1465.7 L1425.1 1515.8 L1428.2 1464.2 L1430.6 1515.5 L1433.9 1466.6 L1437.2 1516.9 L1439.3 1488.3 L1441.9 1515.3 L1444.7 1465.9 L1447.1 1517.8 L1449.2 1467.2 L1451.1 1516.1 L1454.3 1464.8 L1456.2 1515.9 L1459.2 1467.2 L1461.6 1517.6 L1464.0 1466.3 L1466.2 1516.4 L1468.2 1465.4 L1471.5 1515.0 L1474.8 1466.6 L1478.0 1515.1 L1480.1 1468.3 L1483.3 1516.2 L1485.3 1465.8 L1487.8 1517.3 L1490.1 1466.4 L1492.6 1516.2 L1494.9 1465.5 L1497.1 1516.2 L1500.1 1464.3 L1502.4 1518.2 L1504.6 1464.8 L1506.8 1513.6 L1509.1 1466.4 L1511.9 1516.5 L1514.9 1467.6 L1517.9 1516.7 L1520.5 1464.7 L1523.1 1516.1 L1525.1 1464.3 L1527.8 1516.9 L1530.4 1464.6 L1533.2 1517.4 L1535.9 1464.1 L1538.2 1516.3 L1540.3 1468.2 L1542.3 1516.7 L1545.5 1465.2 L1548.6 1516.0 L1551.4 1468.3 L1553.8 1516.3 L1555.8 1467.8 L1559.2 1515.3 L1562.3 1485.7 L1564.8 1517.7 L1567.8 1469.0 L1570.9 1516.5 L1572.9 1468.1 L1575.5 1517.7 L1577.5 1466.4 L1580.2 1518.3 L1583.3 1467.4 L1586.0 1506.9 L1588.8 1466.1 L1591.9 1518.2 L1594.9 1483.8 L1597.6 1515.1 L1600.6 1467.6 L1603.6 1517.4 L1605.9 1468.3 L1608.4 1515.2 L1610.6 1465.1 L1613.2 1515.3 L1615.2 1468.9 L1618.3 1515.5 L1621.4 1464.4 L1624.1 1516.1 L1627.3 1468.8 L1630.3 1518.4 L1633.5 1466.6 L1636.2 1515.8 L1639.0 1464.9 L1641.5 1516.9 L1643.9 1465.8 L1646.4 1516.1 L1648.7 1467.4 L1651.5 1518.2 L1654.4 1466.0 L1657.1 1516.9 L1659.1 1467.3 L1662.2 1515.7 L1664.1 1467.7 L1666.2 1517.1 L1668.9 1464.5 L1670.8 1518.1 L1673.3 1486.3 L1676.1 1517.0 L1679.3 1464.8 L1682.6 1516.3 L1685.1 1466.8 L1688.2 1517.4 L1691.2 1467.2 L1694.6 1515.6 L1697.5 1467.9 L1700.5 1518.4 L1702.7 1464.2 L1706.1 1516.5 L1708.9 1464.9 L1711.6 1516.7 L1714.6 1466.2 L1717.4 1517.8 L1720.7 1472.5 L1723.3 1517.4 L1725.8 1466.4 L1728.9 1517.1 L1731.4 1464.5 L1733.4 1516.1 L1736.0 1468.9 L1738.8 1517.9 L1742.0 1465.5 L1744.7 1518.1 L1747.3 1467.8 L1749.3 1517.8 L1751.2 1467.2 L1753.8 1515.3 L1756.1 1465.7 L1758.7 1516.0 L1761.2 1468.3 L1764.4 1516.8 L1767.5 1466.7 L1770.3 1517.3 L1773.6 1489.8 L1775.7 1516.4 L1778.0 1468.6 L1781.2 1516.7 L1783.4 1467.8 L1785.6 1518.5 L1787.8 1465.8 L1790.3 1517.2 L1792.5 1466.3 L1795.7 1518.0 L1797.8 1467.9 L1800.1 1515.3 L1803.2 1470.4 L1805.5 1515.2 L1808.3 1468.2 L1810.5 1517.7 L1812.6 1468.7 L1815.8 1517.9 L1818.5 1467.4 L1821.2 1515.5 L1824.4 1464.3 L1826.3 1516.0 L1829.6 1467.6 L1831.5 1515.7 L1834.0 1465.6 L1836.3 1515.2 L1838.4 1468.3 L1840.7 1513.0 L1842.8 1468.9 L1845.4 1517.4 L1848.0 1467.7 L1850.2 1515.1 L1852.6 1464.7 L1854.8 1516.0 L1856.6 1465.0 L1859.8 1517.8 L1862.7 1474.4 L1865.7 1518.4 L1868.3 1467.9 L1871.6 1516.1 L1874.5 1468.7 L1876.8 1517.5 L1878.9 1466.8 L1881.7 1517.2 L1883.8 1466.7 L1887.0 1515.3 L1889.7 1466.6 L1892.6 1515.0 L1895.3 1466.5 L1898.0 1517.7 L1900.3 1465.2 L1902.5 1515.6 L1905.6 1464.6 L1908.7 1516.0 L1911.6 1467.5 L1914.3 1501.3 L1917.5 1479.5 L1919.5 1517.8 L1921.3 1466.6 L1924.4 1518.3 L1926.4 1465.5 L1929.2 1516.4 L1931.7 1464.1 L1934.0 1517.5 L1937.1 1467.9 L1940.4 1517.1 L1943.5 1465.1 L1946.5 1516.3 L1949.8 1466.7 L1952.3 1515.1 L1955.1 1471.5 L1957.0 1517.9 L1959.5 1467.2 L1962.4 1517.8 L1965.2 1465.2 L1967.6 1517.3 L1970.8 1484.1 L1972.7 1517.3 L1975.7 1464.3 L1978.5 1516.8 L1980.7 1464.2 L1983.5 1517.2 L1985.6 1468.1 L1988.4 1517.9 L1990.9 1467.5 L1993.5 1516.6 L1996.5 1467.8 L1999.7 1517.7 L2002.7 1465.6 L2005.0 1517.0 L2007.4 1468.5 L2010.8 1517.1 L2013.6 1467.7 L2016.9 1517.2 L2019.0 1465.8 L2022.1 1518.0 L2024.8 1467.3 L2027.5 1515.9 L2030.9 1464.6 L2033.3 1515.4 L2035.8 1464.1 L2038.4 1516.6 L2040.9 1465.3 L2043.3 1516.5 L2046.6 1468.4 L2049.3 1516.7 L2051.7 1467.0 L2053.9 1516.4 L2056.7 1465.3 L2059.0 1509.8 L2062.2 1464.7 L2064.9 1516.7 L2067.6 1467.2 L2069.8 1516.0 L2071.7 1464.2 L2073.7 1515.7 L2076.7 1468.2 L2079.4 1516.5 L2081.9 1467.4 L2084.5 1517.6 L2087.4 1468.4 L2089.4 1516.2 L2091.5 1466.4 L2094.2 1518.0 L2097.2 1466.2 L2099.3 1518.5 L2101.4 1465.9 L2104.8 1516.7 L2107.2 1467.7 L2109.1 1518.4 L2111.7 1467.1 L2114.6 1518.1 L2117.9 1465.6 L2120.9 1516.3 L2122.8 1464.7 L2125.3 1515.7 L2127.6 1466.0 L2130.4 1517.3 L2133.1 1468.0 L2136.3 1518.3 L2138.9 1485.0 L2141.5 1515.3 L2144.5 1464.3 L2147.5 1517.4 L2149.5 1484.7 L2151.4 1516.1 L2153.6 1468.9 L2155.5 1518.3 L2157.5 1464.1 L2159.8 1515.6 L2162.0 1466.2 L2165.4 1515.3 L2167.3 1468.1 L2170.5 1518.0 L2173.5 1468.2 L2176.6 1518.1 L2179.3 1467.1 L2182.3 1509.9 L2185.6 1465.6 L2188.9 1516.5 L2191.5 1466.1 L2194.5 1516.5 L2197.4 1484.3 L2200.1 1517.3 L2203.4 1465.9 L2205.7 1517.3 L2207.6 1466.0 L2209.7 1515.2 L2211.9 1467.5 L2214.0 1517.3 L2216.6 1466.3 L2219.1 1517.1 L2221.5 1468.3 L2224.9 1516.0 L2226.7 1468.9 L2230.2 1515.7 L2232.4 1466.2 L2235.7 1517.9 L2238.4 1466.3 L2240.4 1518.2 L2242.8 1475.1 L2245.2 1515.7 L2247.1 1466.5 L2249.2 1515.4 L2251.4 1467.3 L2254.6 1515.8 L2257.4 1476.5 L2260.4 1517.7 L2263.6 1468.5 L2266.4 1516.7 L2268.9 1466.8 L2271.9 1517.3 L2273.9 1467.6 L2277.2 1517.3 L2280.1 1467.5 L2283.0 1516.2 L2286.4 1464.2 L2288.4 1518.0 L2290.4 1466.5 L2293.3 1518.5 L2295.9 1467.1 L2297.8 1517.9 L2299.9 1465.4 L2302.1 1517.9 L2304.6 1468.5 L2307.8 1518.1 L2309.9 1464.4 L2312.3 1517.0 L2314.3 1464.8 L2317.3 1516.1 L2319.3 1465.0 L2321.7 1518.1 L2324.7 1468.2 L2327.9 1517.6 L2330.4 1466.0 L2333.2 1515.5 L2336.1 1464.5 L2339.4 1518.4 L2342.5 1467.0 L2345.1 1515.6 L2348.0 1466.9 L2351.3 1515.6 L2354.7 1465.8 L2357.4 1516.3 L2359.6 1465.1 L2362.6 1516.8 L2364.5 1464.1 L2367.8 1516.3 L2370.3 1465.3 L2373.8 1515.8 L2376.8 1467.0 L2380.2 1516.1 L2383.4 1464.3 L2386.1 1516.4 L2388.5 1468.2 L2390.4 1517.5 L2393.8 1465.3 L2396.6 1515.5 L2399.7 1467.0 L2402.6 1515.5 L2404.7 1465.6 L2406.9 1515.3 L2409.0 1467.9 L2411.6 1518.2 L2414.3 1467.8 L2417.6 1517.6 L2420.9 1468.9 L2424.2 1516.7 L2427.5 1467.1 L2430.1 1516.5 L2431.9 1466.3 L2434.5 1517.1 L2437.6 1468.0 L2439.5 1518.3 L2442.5 1468.9 L2444.6 1518.1 L2447.0 1464.9 L2449.0 1517.6 L2452.1 1466.8 L2455.2 1516.6 L2457.8 1466.2 L2461.0 1518.3 L2463.2 1465.5 L2465.1 1515.6 L2467.6 1466.3 L2470.0 1515.1 L2473.2 1465.5 L2476.2 1515.8 L2479.6 1465.7 L2483.0 1516.6 L2486.2 1465.3 L2488.1 1515.5 L2491.2 1466.7 L2493.5 1518.4 L2496.4 1467.1 L2498.3 1518.0 L2500.6 1468.8 L2502.7 1515.2 L2505.7 1472.0 L2508.3 1516.9 L2510.2 1464.9 L2512.4 1515.8 L2514.5 1465.9 L2517.4 1517.0 L2520.4 1467.4 L2522.3 1517.0 L2525.2 1468.9 L2527.3 1516.9 L2530.1 1464.3 L2532.6 1517.6 L2535.8 1466.6 L2537.8 1516.5 L2540.9 1464.2 L2543.8 1515.3 L2546.7 1468.3 L2549.6 1516.3 L2552.8 1469.8 L2555.3 1518.4 L2558.7 1468.2 L2560.9 1515.6 L2563.3 1467.7 L2565.9 1515.1 L2568.0 1467.3 L2570.2 1517.3 L2572.5 1468.2 L2574.8 1517.2 L2577.9 1464.3 L2581.2 1517.1 L2583.2 1468.1 L2586.3 1518.2 L2589.0 1465.4 L2591.1 1516.4 L2594.2 1465.5 L2597.3 1516.4 L2600.2 1466.0 L2602.4 1515.3 L2604.9 1464.9 L2607.1 1516.2 L2609.3 1464.2 L2612.6 1518.4 L2615.9 1468.7 L2618.1 1517.8 L2620.2 1468.9 L2622.4 1515.4 L2624.6 1468.0 L2626.8 1517.4 L2629.9 1467.9 L2632.8 1516.6 L2634.8 1464.0 L2637.8 1515.6" fill="none" stroke="#f2b46e" stroke-width="2.3"/></svg>
<div style="left:2637.0px;top:1460.0px;width:7.0px;height:85.0px;background:#fff;border:2px solid #222;border-radius:4px;box-sizing:border-box;"></div>
<div style="left:2634.5px;top:1475.0px;width:10.0px;height:35.0px;background:#222;border-radius:3px;"></div>
<div style="left:2638.5px;top:1526.0px;width:4.0px;height:12.0px;background:#aaa;"></div>
<div style="left:1110.0px;top:1546.0px;width:1532.0px;height:3.0px;background:#222;"></div>
<div style="left:1109.3px;top:1546.0px;width:2.4px;height:9.0px;background:#222;"></div>
<div style="left:2640.3px;top:1546.0px;width:2.4px;height:9.0px;background:#222;"></div>
<div style="left:1287.6px;top:1546.0px;width:2.4px;height:9.0px;background:#222;"></div>
<div style="left:1271.0px;top:1558.8px;font-size:20px;line-height:20px;color:#333;white-space:nowrap;">Sep</div>
<div style="left:1537.8px;top:1546.0px;width:2.4px;height:9.0px;background:#222;"></div>
<div style="left:1523.4px;top:1558.8px;font-size:20px;line-height:20px;color:#333;white-space:nowrap;">Oct</div>
<div style="left:1795.8px;top:1546.0px;width:2.4px;height:9.0px;background:#222;"></div>
<div style="left:1779.2px;top:1558.8px;font-size:20px;line-height:20px;color:#333;white-space:nowrap;">Nov</div>
<div style="left:2045.8px;top:1546.0px;width:2.4px;height:9.0px;background:#222;"></div>
<div style="left:2029.2px;top:1558.8px;font-size:20px;line-height:20px;color:#333;white-space:nowrap;">Dec</div>
<div style="left:2303.6px;top:1546.0px;width:2.4px;height:9.0px;background:#222;"></div>
<div style="left:2282.6px;top:1558.8px;font-size:20px;line-height:20px;color:#333;white-space:nowrap;">2022</div>
<div style="left:2561.8px;top:1546.0px;width:2.4px;height:9.0px;background:#222;"></div>
<div style="left:2545.8px;top:1558.8px;font-size:20px;line-height:20px;color:#333;white-space:nowrap;">Feb</div>
<div style="left:1110.0px;top:1597.0px;width:489.3px;height:45.8px;background:#fff;border:2px solid #dcdcdc;border-radius:7px;box-sizing:border-box;"></div>
<div style="left:1391.0px;top:1599.0px;width:70.0px;height:42.0px;background:#eef4fa;"></div>
<div style="left:1176.0px;top:1598.0px;width:2.0px;height:44.0px;background:#dcdcdc;"></div>
<div style="left:1248.0px;top:1598.0px;width:2.0px;height:44.0px;background:#dcdcdc;"></div>
<div style="left:1318.0px;top:1598.0px;width:2.0px;height:44.0px;background:#dcdcdc;"></div>
<div style="left:1390.0px;top:1598.0px;width:2.0px;height:44.0px;background:#dcdcdc;"></div>
<div style="left:1460.0px;top:1598.0px;width:2.0px;height:44.0px;background:#dcdcdc;"></div>
<div style="left:1522.0px;top:1598.0px;width:2.0px;height:44.0px;background:#dcdcdc;"></div>
<div style="left:1128.2px;top:1607.6px;font-size:24px;line-height:24px;color:#222;white-space:nowrap;">1D</div>
<div style="left:1195.0px;top:1607.6px;font-size:24px;line-height:24px;color:#222;white-space:nowrap;">1W</div>
<div style="left:1267.3px;top:1607.6px;font-size:24px;line-height:24px;color:#222;white-space:nowrap;">1M</div>
<div style="left:1338.3px;top:1607.6px;font-size:24px;line-height:24px;color:#222;white-space:nowrap;">3M</div>
<div style="left:1409.3px;top:1607.6px;font-size:24px;line-height:24px;color:#0b5cc2;white-space:nowrap;">6M</div>
<div style="left:1477.3px;top:1607.6px;font-size:24px;line-height:24px;color:#222;white-space:nowrap;">1Y</div>
<div style="left:1539.8px;top:1607.6px;font-size:24px;line-height:24px;color:#222;white-space:nowrap;">ALL</div>
<div style="left:1633.0px;top:1597.0px;width:204.0px;height:45.8px;background:#fff;border:2px solid #dcdcdc;border-radius:7px;box-sizing:border-box;"></div>
<div style="left:1790.0px;top:1598.0px;width:2.0px;height:44.0px;background:#dcdcdc;"></div>
<div style="left:1649.3px;top:1607.6px;font-size:24px;line-height:24px;color:#222;transform:scaleX(0.9627);transform-origin:0 0;white-space:nowrap;">CUSTOM</div>
<svg style="left:1762.0px;top:1616.0px;" width="17" height="9" viewBox="0 0 17 9"><polygon points="0,9 17,9 8.5,0" fill="#aaa"/></svg>
<svg style="left:1803.0px;top:1612.0px;" width="24" height="20" viewBox="0 0 24 20"><rect x="1.2" y="1.2" width="21" height="16.5" rx="1.5" fill="none" stroke="#333" stroke-width="2.2"/><g fill="#333"><rect x="11" y="4" width="2" height="2"/><rect x="11" y="13" width="2" height="2"/><rect x="5" y="8.5" width="2" height="2"/><rect x="17" y="8.5" width="2" height="2"/></g></svg>
</body></html>
